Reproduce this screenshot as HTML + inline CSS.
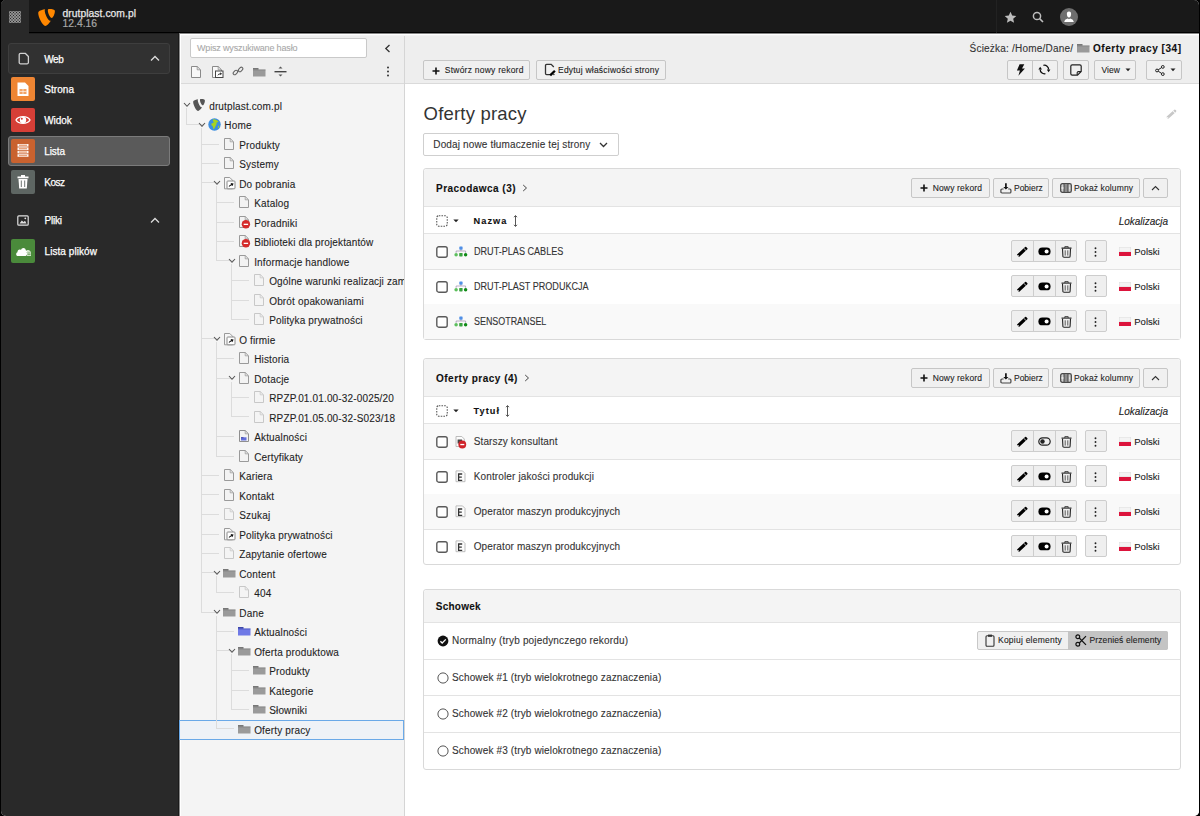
<!DOCTYPE html><html><head><meta charset="utf-8"><style>
html,body{margin:0;padding:0;}
body{width:1200px;height:816px;overflow:hidden;background:#000;position:relative;font-family:"Liberation Sans",sans-serif;}
.t{position:absolute;white-space:nowrap;line-height:1;-webkit-text-stroke:0.1px currentColor;}
.r{position:absolute;}
#app{position:absolute;left:1px;top:0;width:1198px;height:816px;border-radius:5px;overflow:hidden;background:#fff;}
</style></head><body><div id="app"><div id="w" style="position:absolute;left:-1px;top:0;width:1200px;height:816px;"><div class="r" style="left:0px;top:0px;width:1200px;height:33px;background:#191919;border-radius:0px;box-sizing:border-box;"></div>
<div class="r" style="left:29px;top:32px;width:1171px;height:1px;background:#000;border-radius:0px;box-sizing:border-box;"></div>
<div class="r" style="left:0px;top:0px;width:29px;height:33px;background:#292929;border-radius:0px;box-sizing:border-box;"></div>
<div class="r" style="left:0px;top:33px;width:179px;height:783px;background:#292929;border-radius:0px;box-sizing:border-box;"></div>
<div class="r" style="left:178px;top:33px;width:1px;height:783px;background:#1a1a1a;border-radius:0px;box-sizing:border-box;"></div>
<div class="r" style="left:179px;top:33px;width:225px;height:783px;background:#f4f4f4;border-radius:0px;box-sizing:border-box;"></div>
<div class="r" style="left:179px;top:33px;width:225px;height:50px;background:#eeeeee;border-radius:0px;box-sizing:border-box;"></div>
<div class="r" style="left:179px;top:83px;width:225px;height:1px;background:#dadada;border-radius:0px;box-sizing:border-box;"></div>
<div class="r" style="left:404px;top:33px;width:1px;height:783px;background:#d5d5d5;border-radius:0px;box-sizing:border-box;"></div>
<div class="r" style="left:405px;top:33px;width:795px;height:50px;background:#eeeeee;border-radius:0px;box-sizing:border-box;"></div>
<div class="r" style="left:405px;top:83px;width:795px;height:1px;background:#dadada;border-radius:0px;box-sizing:border-box;"></div>
<div class="r" style="left:405px;top:84px;width:795px;height:732px;background:#ffffff;border-radius:0px;box-sizing:border-box;"></div>
<div class="r" style="left:179px;top:33px;width:1021px;height:1px;background:#858585;border-radius:0px;box-sizing:border-box;"></div>
<div class="r" style="left:179px;top:34px;width:1021px;height:1px;background:#ffffff;border-radius:0px;box-sizing:border-box;"></div>
<div class="r" style="left:179px;top:35px;width:1021px;height:1px;background:#f3f3f3;border-radius:0px;box-sizing:border-box;"></div>
<div class="r" style="left:29px;top:33px;width:149px;height:1px;background:#1f1f1f;border-radius:0px;box-sizing:border-box;"></div>
<div class="r" style="left:179px;top:34px;width:1px;height:782px;background:#8a8a8a;border-radius:0px;box-sizing:border-box;"></div>
<div class="r" style="left:180px;top:35px;width:1px;height:781px;background:#ffffff;border-radius:0px;box-sizing:border-box;"></div>
<div class="r" style="left:996px;top:0px;width:1px;height:33px;background:#222;border-radius:0px;box-sizing:border-box;"></div>
<svg class="r" style="left:8.5px;top:10.5px;" width="12" height="12" viewBox="0 0 12 12"><circle cx="1.5" cy="1.5" r="1.15" fill="none" stroke="#cfcfcf" stroke-width="0.8"/><circle cx="1.5" cy="4.5" r="1.15" fill="none" stroke="#cfcfcf" stroke-width="0.8"/><circle cx="1.5" cy="7.5" r="1.15" fill="none" stroke="#cfcfcf" stroke-width="0.8"/><circle cx="1.5" cy="10.5" r="1.15" fill="none" stroke="#cfcfcf" stroke-width="0.8"/><circle cx="4.5" cy="1.5" r="1.15" fill="none" stroke="#cfcfcf" stroke-width="0.8"/><circle cx="4.5" cy="4.5" r="1.15" fill="none" stroke="#cfcfcf" stroke-width="0.8"/><circle cx="4.5" cy="7.5" r="1.15" fill="none" stroke="#cfcfcf" stroke-width="0.8"/><circle cx="4.5" cy="10.5" r="1.15" fill="none" stroke="#cfcfcf" stroke-width="0.8"/><circle cx="7.5" cy="1.5" r="1.15" fill="none" stroke="#cfcfcf" stroke-width="0.8"/><circle cx="7.5" cy="4.5" r="1.15" fill="none" stroke="#cfcfcf" stroke-width="0.8"/><circle cx="7.5" cy="7.5" r="1.15" fill="none" stroke="#cfcfcf" stroke-width="0.8"/><circle cx="7.5" cy="10.5" r="1.15" fill="none" stroke="#cfcfcf" stroke-width="0.8"/><circle cx="10.5" cy="1.5" r="1.15" fill="none" stroke="#cfcfcf" stroke-width="0.8"/><circle cx="10.5" cy="4.5" r="1.15" fill="none" stroke="#cfcfcf" stroke-width="0.8"/><circle cx="10.5" cy="7.5" r="1.15" fill="none" stroke="#cfcfcf" stroke-width="0.8"/><circle cx="10.5" cy="10.5" r="1.15" fill="none" stroke="#cfcfcf" stroke-width="0.8"/></svg>
<svg class="r" style="left:38px;top:9px;" width="17" height="17" viewBox="0 0 24 24"><path d="M18.08 16.539c-.356.107-.64.143-1.014.143-3.05 0-7.53-10.65-7.53-14.195 0-1.306.31-1.741.747-2.122C6.543.808 2.203 2.131.814 3.826c-.306.426-.487 1.094-.487 1.958C.327 11.306 6.22 23.84 10.38 23.84c1.926 0 5.17-3.166 7.7-7.3M16.14.15c3.85 0 7.7.62 7.7 2.8 0 4.42-2.8 9.78-4.23 9.78-2.56 0-5.74-7.12-5.74-10.68C13.87.43 14.45.15 16.14.15" fill="#ff8700"/></svg>
<div class="t" style="left:62.50px;top:8.58px;font-size:10.3px;color:#e8e8e8;font-weight:normal;font-style:normal;letter-spacing:0.053px;-webkit-text-stroke:0.25px #e8e8e8;">drutplast.com.pl</div>
<div class="t" style="left:62.50px;top:18.68px;font-size:10.3px;color:#a8a8a8;font-weight:normal;font-style:normal;letter-spacing:0.023px;-webkit-text-stroke:0.2px #a8a8a8;">12.4.16</div>
<svg class="r" style="left:1003.5px;top:10.5px;" width="13" height="13" viewBox="0 0 13 13"><path d="M6.5 0.8 L8.2 4.6 L12.3 5 L9.2 7.7 L10.1 11.8 L6.5 9.7 L2.9 11.8 L3.8 7.7 L0.7 5 L4.8 4.6 Z" fill="#bdbdbd"/></svg>
<svg class="r" style="left:1031.5px;top:10.5px;" width="12" height="12" viewBox="0 0 12 12"><circle cx="5" cy="5" r="3.6" fill="none" stroke="#bdbdbd" stroke-width="1.5"/><path d="M7.6 7.6 L11 11" stroke="#bdbdbd" stroke-width="1.6"/></svg>
<svg class="r" style="left:1059.5px;top:8px;" width="18" height="18" viewBox="0 0 18 18"><circle cx="9" cy="9" r="9" fill="#6e6e6e"/><path d="M9 3.5 C10.6 3.5 11.3 4.8 11.1 6.6 C10.9 8.3 10.2 9.6 9 9.6 C7.8 9.6 7.1 8.3 6.9 6.6 C6.7 4.8 7.4 3.5 9 3.5Z M4.2 14 C4.4 11.8 6.3 10.8 7.8 10.4 L9 11.2 L10.2 10.4 C11.7 10.8 13.6 11.8 13.8 14 Z" fill="#fff"/></svg>
<div class="r" style="left:8px;top:43px;width:162px;height:31px;background:#313131;border:1px solid #3e3e3e;border-radius:3px;box-sizing:border-box;"></div>
<svg class="r" style="left:17.5px;top:52px;" width="12" height="13" viewBox="0 0 12 13"><path d="M2.6 1.3 H7.2 L10.4 4.5 V10.4 A1.4 1.4 0 0 1 9 11.8 H2.6 A1.4 1.4 0 0 1 1.2 10.4 V2.7 A1.4 1.4 0 0 1 2.6 1.3Z" fill="none" stroke="#d0d0d0" stroke-width="1.3" stroke-linejoin="round"/></svg>
<div class="t" style="left:44.20px;top:54.83px;font-size:10px;color:#fff;font-weight:normal;font-style:normal;letter-spacing:-0.34px;-webkit-text-stroke:0.25px #fff;">Web</div>
<svg class="r" style="left:150px;top:55px;" width="10" height="7" viewBox="0 0 10 7"><path d="M1 5.5 L5 1.5 L9 5.5" fill="none" stroke="#dcdcdc" stroke-width="1.3"/></svg>
<div class="r" style="left:8px;top:136px;width:162px;height:30px;background:#5a5a5a;border:1px solid #7b7b7b;border-radius:3px;box-sizing:border-box;"></div>
<div class="r" style="left:11px;top:77px;width:24px;height:24px;background:#ee8533;border-radius:2px;box-sizing:border-box;"></div>
<svg class="r" style="left:17px;top:82px;" width="12" height="15" viewBox="0 0 12 15"><path d="M0.5 0.5 H8 L11.5 4 V14 H0.5 Z" fill="#fff"/><rect x="2.5" y="7" width="7" height="5" fill="#f2a466"/><path d="M2.5 9.5 H9.5 M6 7 V12" stroke="#fff" stroke-width="0.6"/></svg>
<div class="t" style="left:44.20px;top:84.73px;font-size:10px;color:#fff;font-weight:normal;font-style:normal;letter-spacing:0.066px;-webkit-text-stroke:0.25px #fff;">Strona</div>
<div class="r" style="left:11px;top:108px;width:24px;height:24px;background:#d63f37;border-radius:2px;box-sizing:border-box;"></div>
<svg class="r" style="left:15px;top:114px;" width="16" height="12" viewBox="0 0 16 12"><path d="M1 6 C3.5 1.5 12.5 1.5 15 6 C12.5 10.5 3.5 10.5 1 6Z" fill="none" stroke="#fff" stroke-width="1.4"/><circle cx="8" cy="6" r="3.2" fill="#fff"/><circle cx="6.8" cy="4.8" r="1" fill="#d63f37"/></svg>
<div class="t" style="left:44.20px;top:115.73px;font-size:10px;color:#fff;font-weight:normal;font-style:normal;letter-spacing:-0.05px;-webkit-text-stroke:0.25px #fff;">Widok</div>
<div class="r" style="left:11px;top:139px;width:24px;height:24px;background:#c9622f;border-radius:2px;box-sizing:border-box;"></div>
<svg class="r" style="left:16px;top:143px;" width="14" height="16" viewBox="0 0 14 16"><rect x="1.5" y="1.0" width="11" height="2.6" fill="#fff" opacity="0.95"/><rect x="3" y="1.6" width="8" height="1.4" fill="#e9a47d"/><rect x="1.5" y="4.4" width="11" height="2.6" fill="#fff" opacity="0.95"/><rect x="3" y="5.0" width="8" height="1.4" fill="#e9a47d"/><rect x="1.5" y="7.8" width="11" height="2.6" fill="#fff" opacity="0.95"/><rect x="3" y="8.4" width="8" height="1.4" fill="#e9a47d"/><rect x="1.5" y="11.2" width="11" height="2.6" fill="#fff" opacity="0.95"/><rect x="3" y="11.799999999999999" width="8" height="1.4" fill="#e9a47d"/></svg>
<div class="t" style="left:44.20px;top:146.73px;font-size:10px;color:#fff;font-weight:normal;font-style:normal;letter-spacing:-0.082px;-webkit-text-stroke:0.25px #fff;">Lista</div>
<div class="r" style="left:11px;top:170px;width:24px;height:24px;background:#5e6663;border-radius:2px;box-sizing:border-box;"></div>
<svg class="r" style="left:17px;top:175px;" width="12" height="14" viewBox="0 0 12 14"><rect x="0.5" y="1.5" width="11" height="1.8" fill="#fff"/><rect x="4" y="0" width="4" height="2" fill="#fff"/><path d="M1.5 4 H10.5 L9.8 13.5 H2.2 Z" fill="#fff"/><path d="M4.3 5.5 V12 M7.7 5.5 V12" stroke="#5e6663" stroke-width="0.9"/></svg>
<div class="t" style="left:44.20px;top:177.73px;font-size:10px;color:#fff;font-weight:normal;font-style:normal;letter-spacing:-0.477px;-webkit-text-stroke:0.25px #fff;">Kosz</div>
<svg class="r" style="left:17px;top:215px;" width="12" height="11" viewBox="0 0 12 11"><rect x="0.8" y="0.8" width="10.4" height="9.4" rx="1" fill="none" stroke="#e0e0e0" stroke-width="1.2"/><path d="M2.5 8.5 L4.8 5.5 L6.5 7 L8 5.8 L9.5 8.5 Z" fill="#e0e0e0"/><circle cx="8.3" cy="3.3" r="0.9" fill="#e0e0e0"/></svg>
<div class="t" style="left:44.50px;top:216.03px;font-size:10px;color:#fff;font-weight:normal;font-style:normal;letter-spacing:-0.21px;-webkit-text-stroke:0.25px #fff;">Pliki</div>
<svg class="r" style="left:150px;top:217px;" width="10" height="7" viewBox="0 0 10 7"><path d="M1 5.5 L5 1.5 L9 5.5" fill="none" stroke="#dcdcdc" stroke-width="1.3"/></svg>
<div class="r" style="left:11px;top:239px;width:24px;height:24px;background:#4a8a3b;border-radius:2px;box-sizing:border-box;"></div>
<svg class="r" style="left:15px;top:245px;" width="17" height="12" viewBox="0 0 17 12"><path d="M3 11 C0.8 11 0.5 8 2.5 7.3 C2.2 5 4.5 3.8 6 5 C6.5 2.2 10.5 2.2 10.8 5.2 C12.3 5.2 12.5 7 11.6 7.6 C12.6 8.5 12 11 10.5 11 Z" fill="#fff"/><path d="M12 5 H14 L16 7 V11 H12" fill="#cfe3c8"/><path d="M12.5 8 H15.5 M12.5 9.5 H15.5" stroke="#4a8a3b" stroke-width="0.6"/></svg>
<div class="t" style="left:44.50px;top:246.84px;font-size:10px;color:#fff;font-weight:normal;font-style:normal;letter-spacing:0.071px;-webkit-text-stroke:0.25px #fff;">Lista plików</div>
<div class="r" style="left:190px;top:38px;width:177px;height:20px;background:#fff;border:1px solid #c9c9c9;border-radius:2px;box-sizing:border-box;"></div>
<div class="t" style="left:197.00px;top:43.58px;font-size:9px;color:#a9a9a9;font-weight:normal;font-style:normal;letter-spacing:-0.161px;">Wpisz wyszukiwane hasło</div>
<svg class="r" style="left:384px;top:44px;" width="7" height="9" viewBox="0 0 7 9"><path d="M5.5 1 L1.8 4.5 L5.5 8" fill="none" stroke="#333" stroke-width="1.3"/></svg>
<svg class="r" style="left:385.5px;top:66px;" width="4" height="11" viewBox="0 0 4 11"><circle cx="2" cy="1.5" r="1" fill="#333"/><circle cx="2" cy="5.5" r="1" fill="#333"/><circle cx="2" cy="9.5" r="1" fill="#333"/></svg>
<svg class="r" style="left:190px;top:64.5px;" width="12" height="14" viewBox="0 0 12 14"><path d="M1.5 1.5 H7.2 L10.5 4.8 V12.5 H1.5 Z" fill="#f8f8f8" stroke="#8a8a8a" stroke-width="1"/><path d="M7.2 1.5 V4.8 H10.5" fill="none" stroke="#8a8a8a" stroke-width="0.8"/></svg>
<svg class="r" style="left:211px;top:64.5px;" width="14" height="14" viewBox="0 0 14 14"><path d="M1.5 1.5 H7.2 L10.5 4.8 V12.5 H1.5 Z" fill="#f8f8f8" stroke="#8a8a8a" stroke-width="1"/><path d="M7.2 1.5 V4.8 H10.5" fill="none" stroke="#8a8a8a" stroke-width="0.8"/><rect x="4.5" y="6" width="7.5" height="6.5" fill="#fff" stroke="#444" stroke-width="1"/><path d="M6.3 11 Q6.8 8.3 9.3 8.3 L9.3 7.3 L11 8.8 L9.3 10.3 L9.3 9.3 Q7.5 9.3 6.3 11Z" fill="#222"/></svg>
<svg class="r" style="left:232px;top:65px;" width="12" height="12" viewBox="0 0 12 12"><path d="M5.2 6.8 L6.8 5.2" stroke="#777" stroke-width="1.2"/><rect x="0.9" y="6" width="5" height="3" rx="1.5" transform="rotate(-45 3.4 7.5)" fill="none" stroke="#666" stroke-width="1.1"/><rect x="6.1" y="3" width="5" height="3" rx="1.5" transform="rotate(-45 8.6 4.5)" fill="none" stroke="#666" stroke-width="1.1"/></svg>
<svg class="r" style="left:253px;top:66.5px;" width="13" height="10" viewBox="0 0 13 10"><rect x="0" y="1" width="5.5" height="2" fill="#777"/><rect x="0" y="2.5" width="12.5" height="7" fill="#9a9a9a"/><rect x="0" y="2.5" width="12.5" height="1" fill="#777" opacity="0.5"/></svg>
<svg class="r" style="left:274px;top:64.5px;" width="13" height="13" viewBox="0 0 13 13"><path d="M4.5 3.5 L6.5 1.5 L8.5 3.5Z M4.5 9.5 L6.5 11.5 L8.5 9.5Z" fill="#555"/><rect x="0.5" y="6" width="12" height="1.4" fill="#444"/></svg>
<div style="position:absolute;left:0;top:0;width:404px;height:816px;overflow:hidden">
<div class="r" style="left:179px;top:720px;width:225px;height:20px;background:#eef2f7;border:1px solid #6aa9e8;border-radius:0px;box-sizing:border-box;"></div>
<div class="r" style="left:186px;top:108px;width:1px;height:16px;background:#dcdcdc;border-radius:0px;box-sizing:border-box;"></div>
<div class="r" style="left:186px;top:124px;width:18px;height:1px;background:#dcdcdc;border-radius:0px;box-sizing:border-box;"></div>
<div class="r" style="left:201px;top:128px;width:1px;height:484px;background:#dcdcdc;border-radius:0px;box-sizing:border-box;"></div>
<div class="r" style="left:201px;top:144px;width:18px;height:1px;background:#dcdcdc;border-radius:0px;box-sizing:border-box;"></div>
<div class="r" style="left:201px;top:163px;width:18px;height:1px;background:#dcdcdc;border-radius:0px;box-sizing:border-box;"></div>
<div class="r" style="left:201px;top:182px;width:18px;height:1px;background:#dcdcdc;border-radius:0px;box-sizing:border-box;"></div>
<div class="r" style="left:216px;top:186px;width:1px;height:74px;background:#dcdcdc;border-radius:0px;box-sizing:border-box;"></div>
<div class="r" style="left:216px;top:202px;width:18px;height:1px;background:#dcdcdc;border-radius:0px;box-sizing:border-box;"></div>
<div class="r" style="left:216px;top:222px;width:18px;height:1px;background:#dcdcdc;border-radius:0px;box-sizing:border-box;"></div>
<div class="r" style="left:216px;top:241px;width:18px;height:1px;background:#dcdcdc;border-radius:0px;box-sizing:border-box;"></div>
<div class="r" style="left:216px;top:260px;width:18px;height:1px;background:#dcdcdc;border-radius:0px;box-sizing:border-box;"></div>
<div class="r" style="left:231px;top:264px;width:1px;height:55px;background:#dcdcdc;border-radius:0px;box-sizing:border-box;"></div>
<div class="r" style="left:231px;top:280px;width:18px;height:1px;background:#dcdcdc;border-radius:0px;box-sizing:border-box;"></div>
<div class="r" style="left:231px;top:300px;width:18px;height:1px;background:#dcdcdc;border-radius:0px;box-sizing:border-box;"></div>
<div class="r" style="left:231px;top:319px;width:18px;height:1px;background:#dcdcdc;border-radius:0px;box-sizing:border-box;"></div>
<div class="r" style="left:201px;top:338px;width:18px;height:1px;background:#dcdcdc;border-radius:0px;box-sizing:border-box;"></div>
<div class="r" style="left:216px;top:342px;width:1px;height:114px;background:#dcdcdc;border-radius:0px;box-sizing:border-box;"></div>
<div class="r" style="left:216px;top:358px;width:18px;height:1px;background:#dcdcdc;border-radius:0px;box-sizing:border-box;"></div>
<div class="r" style="left:216px;top:378px;width:18px;height:1px;background:#dcdcdc;border-radius:0px;box-sizing:border-box;"></div>
<div class="r" style="left:231px;top:382px;width:1px;height:34px;background:#dcdcdc;border-radius:0px;box-sizing:border-box;"></div>
<div class="r" style="left:231px;top:397px;width:18px;height:1px;background:#dcdcdc;border-radius:0px;box-sizing:border-box;"></div>
<div class="r" style="left:231px;top:416px;width:18px;height:1px;background:#dcdcdc;border-radius:0px;box-sizing:border-box;"></div>
<div class="r" style="left:216px;top:436px;width:18px;height:1px;background:#dcdcdc;border-radius:0px;box-sizing:border-box;"></div>
<div class="r" style="left:216px;top:456px;width:18px;height:1px;background:#dcdcdc;border-radius:0px;box-sizing:border-box;"></div>
<div class="r" style="left:201px;top:475px;width:18px;height:1px;background:#dcdcdc;border-radius:0px;box-sizing:border-box;"></div>
<div class="r" style="left:201px;top:494px;width:18px;height:1px;background:#dcdcdc;border-radius:0px;box-sizing:border-box;"></div>
<div class="r" style="left:201px;top:514px;width:18px;height:1px;background:#dcdcdc;border-radius:0px;box-sizing:border-box;"></div>
<div class="r" style="left:201px;top:534px;width:18px;height:1px;background:#dcdcdc;border-radius:0px;box-sizing:border-box;"></div>
<div class="r" style="left:201px;top:553px;width:18px;height:1px;background:#dcdcdc;border-radius:0px;box-sizing:border-box;"></div>
<div class="r" style="left:201px;top:572px;width:18px;height:1px;background:#dcdcdc;border-radius:0px;box-sizing:border-box;"></div>
<div class="r" style="left:216px;top:576px;width:1px;height:16px;background:#dcdcdc;border-radius:0px;box-sizing:border-box;"></div>
<div class="r" style="left:216px;top:592px;width:18px;height:1px;background:#dcdcdc;border-radius:0px;box-sizing:border-box;"></div>
<div class="r" style="left:201px;top:612px;width:18px;height:1px;background:#dcdcdc;border-radius:0px;box-sizing:border-box;"></div>
<div class="r" style="left:216px;top:616px;width:1px;height:112px;background:#dcdcdc;border-radius:0px;box-sizing:border-box;"></div>
<div class="r" style="left:216px;top:631px;width:18px;height:1px;background:#dcdcdc;border-radius:0px;box-sizing:border-box;"></div>
<div class="r" style="left:216px;top:650px;width:18px;height:1px;background:#dcdcdc;border-radius:0px;box-sizing:border-box;"></div>
<div class="r" style="left:231px;top:654px;width:1px;height:55px;background:#dcdcdc;border-radius:0px;box-sizing:border-box;"></div>
<div class="r" style="left:231px;top:670px;width:18px;height:1px;background:#dcdcdc;border-radius:0px;box-sizing:border-box;"></div>
<div class="r" style="left:231px;top:690px;width:18px;height:1px;background:#dcdcdc;border-radius:0px;box-sizing:border-box;"></div>
<div class="r" style="left:231px;top:709px;width:18px;height:1px;background:#dcdcdc;border-radius:0px;box-sizing:border-box;"></div>
<div class="r" style="left:216px;top:728px;width:18px;height:1px;background:#dcdcdc;border-radius:0px;box-sizing:border-box;"></div>
<svg class="r" style="left:183px;top:102.4px;" width="8" height="5.3" viewBox="0 0 8 5.3"><path d="M1 1 L4.0 4.3 L7 1" fill="none" stroke="#555" stroke-width="1.1"/></svg>
<svg class="r" style="left:193px;top:99.0px;" width="12" height="12" viewBox="0 0 24 24"><path d="M18.08 16.539c-.356.107-.64.143-1.014.143-3.05 0-7.53-10.65-7.53-14.195 0-1.306.31-1.741.747-2.122C6.543.808 2.203 2.131.814 3.826c-.306.426-.487 1.094-.487 1.958C.327 11.306 6.22 23.84 10.38 23.84c1.926 0 5.17-3.166 7.7-7.3M16.14.15c3.85 0 7.7.62 7.7 2.8 0 4.42-2.8 9.78-4.23 9.78-2.56 0-5.74-7.12-5.74-10.68C13.87.43 14.45.15 16.14.15" fill="#555"/></svg>
<div class="t" style="left:209.20px;top:101.53px;font-size:10px;color:#1f1f1f;font-weight:normal;font-style:normal;letter-spacing:0.141px;">drutplast.com.pl</div>
<svg class="r" style="left:198px;top:121.9px;" width="8" height="5.3" viewBox="0 0 8 5.3"><path d="M1 1 L4.0 4.3 L7 1" fill="none" stroke="#555" stroke-width="1.1"/></svg>
<svg class="r" style="left:207.5px;top:117.7px;" width="13" height="13" viewBox="0 0 13 13"><circle cx="6.5" cy="6.5" r="6.2" fill="#3d8fe0"/><path d="M5 1.2 C7 1 9.5 2 10.5 3.5 C9.8 4.5 9 4 8.5 5 C9 6 8 7 7.5 8 C7.2 9.5 6.2 10.8 5.5 11.5 C5 10 5.3 8.8 4.5 8 C3.5 7.5 3 6.5 3.5 5.5 C4.5 5 5.5 5.2 5.8 4.2 C5.2 3.5 4.5 2.5 5 1.2Z" fill="#a5d321"/><path d="M10.5 7.5 C11.5 8 11.5 9.5 10.5 10.5 C10 9.5 9.8 8.5 10.5 7.5Z" fill="#a5d321"/></svg>
<div class="t" style="left:224.20px;top:121.03px;font-size:10px;color:#1f1f1f;font-weight:normal;font-style:normal;letter-spacing:0.267px;">Home</div>
<svg class="r" style="left:222.5px;top:136.7px;" width="12" height="14" viewBox="0 0 12 14"><path d="M1.5 1.5 H7.2 L10.5 4.8 V12.5 H1.5 Z" fill="#f3f3f3" stroke="#9a9a9a" stroke-width="1"/><path d="M7.2 1.5 V4.8 H10.5" fill="none" stroke="#9a9a9a" stroke-width="0.8"/></svg>
<div class="t" style="left:239.20px;top:140.53px;font-size:10px;color:#1f1f1f;font-weight:normal;font-style:normal;letter-spacing:0.169px;">Produkty</div>
<svg class="r" style="left:222.5px;top:156.2px;" width="12" height="14" viewBox="0 0 12 14"><path d="M1.5 1.5 H7.2 L10.5 4.8 V12.5 H1.5 Z" fill="#f3f3f3" stroke="#9a9a9a" stroke-width="1"/><path d="M7.2 1.5 V4.8 H10.5" fill="none" stroke="#9a9a9a" stroke-width="0.8"/></svg>
<div class="t" style="left:239.20px;top:160.03px;font-size:10px;color:#1f1f1f;font-weight:normal;font-style:normal;letter-spacing:0.192px;">Systemy</div>
<svg class="r" style="left:213px;top:180.4px;" width="8" height="5.3" viewBox="0 0 8 5.3"><path d="M1 1 L4.0 4.3 L7 1" fill="none" stroke="#555" stroke-width="1.1"/></svg>
<svg class="r" style="left:222.5px;top:175.7px;" width="14" height="14" viewBox="0 0 14 14"><path d="M1.5 1.5 H6.8 L9.6 4.3 V12.8 H1.5 Z" fill="#f6f6f6" stroke="#9a9a9a" stroke-width="1"/><rect x="4" y="5" width="8" height="7.8" rx="0.8" fill="#fff" stroke="#8a8a8a" stroke-width="1"/><path d="M5.6 11.2 Q6 8.6 8.2 8.2 L7.6 7 L10.6 7.6 L9.4 10.3 L8.9 9.3 Q7.2 9.6 5.6 11.2Z" fill="#111"/></svg>
<div class="t" style="left:239.20px;top:179.53px;font-size:10px;color:#1f1f1f;font-weight:normal;font-style:normal;letter-spacing:0.163px;">Do pobrania</div>
<svg class="r" style="left:237.5px;top:195.2px;" width="12" height="14" viewBox="0 0 12 14"><path d="M1.5 1.5 H7.2 L10.5 4.8 V12.5 H1.5 Z" fill="#f3f3f3" stroke="#9a9a9a" stroke-width="1"/><path d="M7.2 1.5 V4.8 H10.5" fill="none" stroke="#9a9a9a" stroke-width="0.8"/></svg>
<div class="t" style="left:254.20px;top:199.03px;font-size:10px;color:#1f1f1f;font-weight:normal;font-style:normal;letter-spacing:0.17px;">Katalog</div>
<svg class="r" style="left:237.5px;top:214.7px;" width="14" height="15" viewBox="0 0 14 15"><path d="M1.5 1.5 H7.2 L10.5 4.8 V12.5 H1.5 Z" fill="#f3f3f3" stroke="#9a9a9a" stroke-width="1"/><path d="M7.2 1.5 V4.8 H10.5" fill="none" stroke="#9a9a9a" stroke-width="0.8"/><circle cx="7.9" cy="9.3" r="4.2" fill="#d52b2b"/><rect x="5.7" y="8.7" width="4.4" height="1.3" fill="#fff"/></svg>
<div class="t" style="left:254.20px;top:218.53px;font-size:10px;color:#1f1f1f;font-weight:normal;font-style:normal;letter-spacing:0.156px;">Poradniki</div>
<svg class="r" style="left:237.5px;top:234.2px;" width="14" height="15" viewBox="0 0 14 15"><path d="M1.5 1.5 H7.2 L10.5 4.8 V12.5 H1.5 Z" fill="#f3f3f3" stroke="#9a9a9a" stroke-width="1"/><path d="M7.2 1.5 V4.8 H10.5" fill="none" stroke="#9a9a9a" stroke-width="0.8"/><circle cx="7.9" cy="9.3" r="4.2" fill="#d52b2b"/><rect x="5.7" y="8.7" width="4.4" height="1.3" fill="#fff"/></svg>
<div class="t" style="left:254.20px;top:238.03px;font-size:10px;color:#1f1f1f;font-weight:normal;font-style:normal;letter-spacing:0.133px;">Biblioteki dla projektantów</div>
<svg class="r" style="left:228px;top:258.4px;" width="8" height="5.3" viewBox="0 0 8 5.3"><path d="M1 1 L4.0 4.3 L7 1" fill="none" stroke="#555" stroke-width="1.1"/></svg>
<svg class="r" style="left:237.5px;top:253.7px;" width="12" height="14" viewBox="0 0 12 14"><path d="M1.5 1.5 H7.2 L10.5 4.8 V12.5 H1.5 Z" fill="#f3f3f3" stroke="#9a9a9a" stroke-width="1"/><path d="M7.2 1.5 V4.8 H10.5" fill="none" stroke="#9a9a9a" stroke-width="0.8"/></svg>
<div class="t" style="left:254.20px;top:257.54px;font-size:10px;color:#1f1f1f;font-weight:normal;font-style:normal;letter-spacing:0.154px;">Informacje handlowe</div>
<svg class="r" style="left:252.5px;top:273.2px;" width="12" height="14" viewBox="0 0 12 14"><path d="M1.5 1.5 H7.2 L10.5 4.8 V12.5 H1.5 Z" fill="#f4f4f4" stroke="#c8c8c8" stroke-width="1"/><path d="M7.2 1.5 V4.8 H10.5" fill="none" stroke="#c8c8c8" stroke-width="0.8"/></svg>
<div class="t" style="left:269.20px;top:277.04px;font-size:10px;color:#1f1f1f;font-weight:normal;font-style:normal;letter-spacing:0.145px;">Ogólne warunki realizacji zamówień</div>
<svg class="r" style="left:252.5px;top:292.7px;" width="12" height="14" viewBox="0 0 12 14"><path d="M1.5 1.5 H7.2 L10.5 4.8 V12.5 H1.5 Z" fill="#f4f4f4" stroke="#c8c8c8" stroke-width="1"/><path d="M7.2 1.5 V4.8 H10.5" fill="none" stroke="#c8c8c8" stroke-width="0.8"/></svg>
<div class="t" style="left:269.20px;top:296.54px;font-size:10px;color:#1f1f1f;font-weight:normal;font-style:normal;letter-spacing:0.162px;">Obrót opakowaniami</div>
<svg class="r" style="left:252.5px;top:312.2px;" width="12" height="14" viewBox="0 0 12 14"><path d="M1.5 1.5 H7.2 L10.5 4.8 V12.5 H1.5 Z" fill="#f4f4f4" stroke="#c8c8c8" stroke-width="1"/><path d="M7.2 1.5 V4.8 H10.5" fill="none" stroke="#c8c8c8" stroke-width="0.8"/></svg>
<div class="t" style="left:269.20px;top:316.04px;font-size:10px;color:#1f1f1f;font-weight:normal;font-style:normal;letter-spacing:0.143px;">Polityka prywatności</div>
<svg class="r" style="left:213px;top:336.4px;" width="8" height="5.3" viewBox="0 0 8 5.3"><path d="M1 1 L4.0 4.3 L7 1" fill="none" stroke="#555" stroke-width="1.1"/></svg>
<svg class="r" style="left:222.5px;top:331.7px;" width="14" height="14" viewBox="0 0 14 14"><path d="M1.5 1.5 H6.8 L9.6 4.3 V12.8 H1.5 Z" fill="#f6f6f6" stroke="#9a9a9a" stroke-width="1"/><rect x="4" y="5" width="8" height="7.8" rx="0.8" fill="#fff" stroke="#8a8a8a" stroke-width="1"/><path d="M5.6 11.2 Q6 8.6 8.2 8.2 L7.6 7 L10.6 7.6 L9.4 10.3 L8.9 9.3 Q7.2 9.6 5.6 11.2Z" fill="#111"/></svg>
<div class="t" style="left:239.20px;top:335.54px;font-size:10px;color:#1f1f1f;font-weight:normal;font-style:normal;letter-spacing:0.15px;">O firmie</div>
<svg class="r" style="left:237.5px;top:351.2px;" width="12" height="14" viewBox="0 0 12 14"><path d="M1.5 1.5 H7.2 L10.5 4.8 V12.5 H1.5 Z" fill="#f3f3f3" stroke="#9a9a9a" stroke-width="1"/><path d="M7.2 1.5 V4.8 H10.5" fill="none" stroke="#9a9a9a" stroke-width="0.8"/></svg>
<div class="t" style="left:254.20px;top:355.04px;font-size:10px;color:#1f1f1f;font-weight:normal;font-style:normal;letter-spacing:0.145px;">Historia</div>
<svg class="r" style="left:228px;top:375.4px;" width="8" height="5.3" viewBox="0 0 8 5.3"><path d="M1 1 L4.0 4.3 L7 1" fill="none" stroke="#555" stroke-width="1.1"/></svg>
<svg class="r" style="left:237.5px;top:370.7px;" width="12" height="14" viewBox="0 0 12 14"><path d="M1.5 1.5 H7.2 L10.5 4.8 V12.5 H1.5 Z" fill="#f3f3f3" stroke="#9a9a9a" stroke-width="1"/><path d="M7.2 1.5 V4.8 H10.5" fill="none" stroke="#9a9a9a" stroke-width="0.8"/></svg>
<div class="t" style="left:254.20px;top:374.54px;font-size:10px;color:#1f1f1f;font-weight:normal;font-style:normal;letter-spacing:0.17px;">Dotacje</div>
<svg class="r" style="left:252.5px;top:390.2px;" width="12" height="14" viewBox="0 0 12 14"><path d="M1.5 1.5 H7.2 L10.5 4.8 V12.5 H1.5 Z" fill="#f4f4f4" stroke="#c8c8c8" stroke-width="1"/><path d="M7.2 1.5 V4.8 H10.5" fill="none" stroke="#c8c8c8" stroke-width="0.8"/></svg>
<div class="t" style="left:269.20px;top:394.04px;font-size:10px;color:#1f1f1f;font-weight:normal;font-style:normal;letter-spacing:0.158px;">RPZP.01.01.00-32-0025/20</div>
<svg class="r" style="left:252.5px;top:409.7px;" width="12" height="14" viewBox="0 0 12 14"><path d="M1.5 1.5 H7.2 L10.5 4.8 V12.5 H1.5 Z" fill="#f4f4f4" stroke="#c8c8c8" stroke-width="1"/><path d="M7.2 1.5 V4.8 H10.5" fill="none" stroke="#c8c8c8" stroke-width="0.8"/></svg>
<div class="t" style="left:269.20px;top:413.54px;font-size:10px;color:#1f1f1f;font-weight:normal;font-style:normal;letter-spacing:0.159px;">RPZP.01.05.00-32-S023/18</div>
<svg class="r" style="left:237.5px;top:429.2px;" width="12" height="14" viewBox="0 0 12 14"><path d="M1.5 1.5 H7.2 L10.5 4.8 V12.5 H1.5 Z" fill="#f3f3f3" stroke="#8f8f8f" stroke-width="1"/><path d="M7.2 1.5 V4.8 H10.5" fill="none" stroke="#9a9a9a" stroke-width="0.8"/><rect x="3" y="8.3" width="5.5" height="3.2" fill="#6470dc"/><rect x="3" y="8.3" width="2.5" height="0.9" fill="#3a44a0"/></svg>
<div class="t" style="left:254.20px;top:433.04px;font-size:10px;color:#1f1f1f;font-weight:normal;font-style:normal;letter-spacing:0.153px;">Aktualności</div>
<svg class="r" style="left:237.5px;top:448.7px;" width="12" height="14" viewBox="0 0 12 14"><path d="M1.5 1.5 H7.2 L10.5 4.8 V12.5 H1.5 Z" fill="#f3f3f3" stroke="#9a9a9a" stroke-width="1"/><path d="M7.2 1.5 V4.8 H10.5" fill="none" stroke="#9a9a9a" stroke-width="0.8"/></svg>
<div class="t" style="left:254.20px;top:452.54px;font-size:10px;color:#1f1f1f;font-weight:normal;font-style:normal;letter-spacing:0.142px;">Certyfikaty</div>
<svg class="r" style="left:222.5px;top:468.2px;" width="12" height="14" viewBox="0 0 12 14"><path d="M1.5 1.5 H7.2 L10.5 4.8 V12.5 H1.5 Z" fill="#f3f3f3" stroke="#9a9a9a" stroke-width="1"/><path d="M7.2 1.5 V4.8 H10.5" fill="none" stroke="#9a9a9a" stroke-width="0.8"/></svg>
<div class="t" style="left:239.20px;top:472.04px;font-size:10px;color:#1f1f1f;font-weight:normal;font-style:normal;letter-spacing:0.161px;">Kariera</div>
<svg class="r" style="left:222.5px;top:487.7px;" width="12" height="14" viewBox="0 0 12 14"><path d="M1.5 1.5 H7.2 L10.5 4.8 V12.5 H1.5 Z" fill="#f3f3f3" stroke="#9a9a9a" stroke-width="1"/><path d="M7.2 1.5 V4.8 H10.5" fill="none" stroke="#9a9a9a" stroke-width="0.8"/></svg>
<div class="t" style="left:239.20px;top:491.54px;font-size:10px;color:#1f1f1f;font-weight:normal;font-style:normal;letter-spacing:0.17px;">Kontakt</div>
<svg class="r" style="left:222.5px;top:507.2px;" width="12" height="14" viewBox="0 0 12 14"><path d="M1.5 1.5 H7.2 L10.5 4.8 V12.5 H1.5 Z" fill="#f4f4f4" stroke="#c8c8c8" stroke-width="1"/><path d="M7.2 1.5 V4.8 H10.5" fill="none" stroke="#c8c8c8" stroke-width="0.8"/></svg>
<div class="t" style="left:239.20px;top:511.04px;font-size:10px;color:#1f1f1f;font-weight:normal;font-style:normal;letter-spacing:0.18px;">Szukaj</div>
<svg class="r" style="left:222.5px;top:526.7px;" width="14" height="14" viewBox="0 0 14 14"><path d="M1.5 1.5 H6.8 L9.6 4.3 V12.8 H1.5 Z" fill="#f6f6f6" stroke="#9a9a9a" stroke-width="1"/><rect x="4" y="5" width="8" height="7.8" rx="0.8" fill="#fff" stroke="#8a8a8a" stroke-width="1"/><path d="M5.6 11.2 Q6 8.6 8.2 8.2 L7.6 7 L10.6 7.6 L9.4 10.3 L8.9 9.3 Q7.2 9.6 5.6 11.2Z" fill="#111"/></svg>
<div class="t" style="left:239.20px;top:530.53px;font-size:10px;color:#1f1f1f;font-weight:normal;font-style:normal;letter-spacing:0.143px;">Polityka prywatności</div>
<svg class="r" style="left:222.5px;top:546.2px;" width="12" height="14" viewBox="0 0 12 14"><path d="M1.5 1.5 H7.2 L10.5 4.8 V12.5 H1.5 Z" fill="#f4f4f4" stroke="#c8c8c8" stroke-width="1"/><path d="M7.2 1.5 V4.8 H10.5" fill="none" stroke="#c8c8c8" stroke-width="0.8"/></svg>
<div class="t" style="left:239.20px;top:550.03px;font-size:10px;color:#1f1f1f;font-weight:normal;font-style:normal;letter-spacing:0.15px;">Zapytanie ofertowe</div>
<svg class="r" style="left:213px;top:570.4px;" width="8" height="5.3" viewBox="0 0 8 5.3"><path d="M1 1 L4.0 4.3 L7 1" fill="none" stroke="#555" stroke-width="1.1"/></svg>
<svg class="r" style="left:223.0px;top:567.5px;" width="13" height="10" viewBox="0 0 13 10"><rect x="0" y="1" width="5.5" height="2" fill="#777"/><rect x="0" y="2.5" width="12.5" height="7" fill="#9a9a9a"/><rect x="0" y="2.5" width="12.5" height="1" fill="#777" opacity="0.5"/></svg>
<div class="t" style="left:239.20px;top:569.53px;font-size:10px;color:#1f1f1f;font-weight:normal;font-style:normal;letter-spacing:0.175px;">Content</div>
<svg class="r" style="left:237.5px;top:585.2px;" width="12" height="14" viewBox="0 0 12 14"><path d="M1.5 1.5 H7.2 L10.5 4.8 V12.5 H1.5 Z" fill="#f4f4f4" stroke="#c8c8c8" stroke-width="1"/><path d="M7.2 1.5 V4.8 H10.5" fill="none" stroke="#c8c8c8" stroke-width="0.8"/></svg>
<div class="t" style="left:254.20px;top:589.03px;font-size:10px;color:#1f1f1f;font-weight:normal;font-style:normal;letter-spacing:0.25px;">404</div>
<svg class="r" style="left:213px;top:609.4px;" width="8" height="5.3" viewBox="0 0 8 5.3"><path d="M1 1 L4.0 4.3 L7 1" fill="none" stroke="#555" stroke-width="1.1"/></svg>
<svg class="r" style="left:223.0px;top:606.5px;" width="13" height="10" viewBox="0 0 13 10"><rect x="0" y="1" width="5.5" height="2" fill="#777"/><rect x="0" y="2.5" width="12.5" height="7" fill="#9a9a9a"/><rect x="0" y="2.5" width="12.5" height="1" fill="#777" opacity="0.5"/></svg>
<div class="t" style="left:239.20px;top:608.53px;font-size:10px;color:#1f1f1f;font-weight:normal;font-style:normal;letter-spacing:0.239px;">Dane</div>
<svg class="r" style="left:238.0px;top:626.0px;" width="13" height="10" viewBox="0 0 13 10"><rect x="0" y="1" width="5.5" height="2" fill="#3e47a8"/><rect x="0" y="2.5" width="12.5" height="7" fill="#6f79e6"/><rect x="0" y="2.5" width="12.5" height="1" fill="#3e47a8" opacity="0.5"/></svg>
<div class="t" style="left:254.20px;top:628.03px;font-size:10px;color:#1f1f1f;font-weight:normal;font-style:normal;letter-spacing:0.153px;">Aktualności</div>
<svg class="r" style="left:228px;top:648.4px;" width="8" height="5.3" viewBox="0 0 8 5.3"><path d="M1 1 L4.0 4.3 L7 1" fill="none" stroke="#555" stroke-width="1.1"/></svg>
<svg class="r" style="left:238.0px;top:645.5px;" width="13" height="10" viewBox="0 0 13 10"><rect x="0" y="1" width="5.5" height="2" fill="#777"/><rect x="0" y="2.5" width="12.5" height="7" fill="#9a9a9a"/><rect x="0" y="2.5" width="12.5" height="1" fill="#777" opacity="0.5"/></svg>
<div class="t" style="left:254.20px;top:647.53px;font-size:10px;color:#1f1f1f;font-weight:normal;font-style:normal;letter-spacing:0.154px;">Oferta produktowa</div>
<svg class="r" style="left:253.0px;top:665.0px;" width="13" height="10" viewBox="0 0 13 10"><rect x="0" y="1" width="5.5" height="2" fill="#777"/><rect x="0" y="2.5" width="12.5" height="7" fill="#9a9a9a"/><rect x="0" y="2.5" width="12.5" height="1" fill="#777" opacity="0.5"/></svg>
<div class="t" style="left:269.20px;top:667.03px;font-size:10px;color:#1f1f1f;font-weight:normal;font-style:normal;letter-spacing:0.169px;">Produkty</div>
<svg class="r" style="left:253.0px;top:684.5px;" width="13" height="10" viewBox="0 0 13 10"><rect x="0" y="1" width="5.5" height="2" fill="#777"/><rect x="0" y="2.5" width="12.5" height="7" fill="#9a9a9a"/><rect x="0" y="2.5" width="12.5" height="1" fill="#777" opacity="0.5"/></svg>
<div class="t" style="left:269.20px;top:686.53px;font-size:10px;color:#1f1f1f;font-weight:normal;font-style:normal;letter-spacing:0.161px;">Kategorie</div>
<svg class="r" style="left:253.0px;top:704.0px;" width="13" height="10" viewBox="0 0 13 10"><rect x="0" y="1" width="5.5" height="2" fill="#777"/><rect x="0" y="2.5" width="12.5" height="7" fill="#9a9a9a"/><rect x="0" y="2.5" width="12.5" height="1" fill="#777" opacity="0.5"/></svg>
<div class="t" style="left:269.20px;top:706.03px;font-size:10px;color:#1f1f1f;font-weight:normal;font-style:normal;letter-spacing:0.157px;">Słowniki</div>
<svg class="r" style="left:238.0px;top:723.5px;" width="13" height="10" viewBox="0 0 13 10"><rect x="0" y="1" width="5.5" height="2" fill="#777"/><rect x="0" y="2.5" width="12.5" height="7" fill="#9a9a9a"/><rect x="0" y="2.5" width="12.5" height="1" fill="#777" opacity="0.5"/></svg>
<div class="t" style="left:254.20px;top:725.53px;font-size:10px;color:#1f1f1f;font-weight:normal;font-style:normal;letter-spacing:0.149px;">Oferty pracy</div>
</div>
<div class="r" style="left:423px;top:60px;width:107px;height:20px;background:#f0f0f0;border:1px solid #c6c6c6;border-radius:2px;box-sizing:border-box;"></div>
<svg class="r" style="left:431.5px;top:66.5px;" width="8" height="8" viewBox="0 0 8 8"><path d="M4 0.5 V7.5 M0.5 4 H7.5" stroke="#111" stroke-width="1.6"/></svg>
<div class="t" style="left:444.75px;top:66.00px;font-size:8.5px;color:#222;font-weight:normal;font-style:normal;letter-spacing:0.236px;">Stwórz nowy rekord</div>
<div class="r" style="left:536px;top:60px;width:130px;height:20px;background:#f0f0f0;border:1px solid #c6c6c6;border-radius:2px;box-sizing:border-box;"></div>
<svg class="r" style="left:543.5px;top:63px;" width="12" height="14" viewBox="0 0 12 14"><path d="M6.2 11.6 H2.6 A1.1 1.1 0 0 1 1.5 10.5 V2.5 A1.1 1.1 0 0 1 2.6 1.4 H7.2 L9.8 4" fill="none" stroke="#333" stroke-width="1.3"/><path d="M6.2 12.4 L10.9 7.7" stroke="#000" stroke-width="2.3"/><circle cx="9.9" cy="11.5" r="0.75" fill="#222"/></svg>
<div class="t" style="left:558.00px;top:66.00px;font-size:8.5px;color:#222;font-weight:normal;font-style:normal;letter-spacing:0.213px;">Edytuj właściwości strony</div>
<div class="t" style="left:969.60px;top:43.73px;font-size:10px;color:#333;font-weight:normal;font-style:normal;letter-spacing:0.206px;">Ścieżka: /Home/Dane/</div>
<svg class="r" style="left:1077px;top:43px;" width="13" height="10" viewBox="0 0 13 10"><rect x="0" y="1" width="5.5" height="2" fill="#777"/><rect x="0" y="2.5" width="12.5" height="7" fill="#9a9a9a"/><rect x="0" y="2.5" width="12.5" height="1" fill="#777" opacity="0.5"/></svg>
<div class="t" style="left:1093.00px;top:43.73px;font-size:10px;color:#111;font-weight:bold;font-style:normal;letter-spacing:0.532px;">Oferty pracy [34]</div>
<div class="r" style="left:1007px;top:60px;width:51px;height:20px;background:#f0f0f0;border:1px solid #c6c6c6;border-radius:2px;box-sizing:border-box;"></div>
<div class="r" style="left:1032px;top:61px;width:1px;height:18px;background:#c6c6c6;border-radius:0px;box-sizing:border-box;"></div>
<svg class="r" style="left:1015.5px;top:64px;" width="10" height="12" viewBox="0 0 10 12"><path d="M3.6 0.3 H8.3 L6 4.6 H8.9 L2.4 11.8 L3.9 6.6 H0.9 Z" fill="#111"/></svg>
<svg class="r" style="left:1038px;top:64px;" width="13" height="12" viewBox="0 0 13 12"><path d="M5.4 1.3 A4.3 4.3 0 0 1 10.63 5.6" fill="none" stroke="#111" stroke-width="1.3"/><path d="M8.8 5.4 H12.4 L10.6 8.2Z" fill="#111"/><path d="M7.4 9.7 A4.3 4.3 0 0 1 2.17 5.4" fill="none" stroke="#111" stroke-width="1.3"/><path d="M0.4 5.6 H4 L2.2 2.8Z" fill="#111"/></svg>
<div class="r" style="left:1063px;top:60px;width:26px;height:20px;background:#f0f0f0;border:1px solid #c6c6c6;border-radius:2px;box-sizing:border-box;"></div>
<svg class="r" style="left:1070px;top:64px;" width="12" height="12" viewBox="0 0 12 12"><path d="M2.2 0.8 H9.8 A1.4 1.4 0 0 1 11.2 2.2 V7.5 L7.5 11.2 H2.2 A1.4 1.4 0 0 1 0.8 9.8 V2.2 A1.4 1.4 0 0 1 2.2 0.8Z" fill="none" stroke="#222" stroke-width="1.2"/><path d="M7.2 11 V8.8 A1.2 1.2 0 0 1 8.4 7.6 H11" fill="none" stroke="#222" stroke-width="1.1"/></svg>
<div class="r" style="left:1094px;top:60px;width:42px;height:20px;background:#f0f0f0;border:1px solid #c6c6c6;border-radius:2px;box-sizing:border-box;"></div>
<div class="t" style="left:1101.40px;top:66.00px;font-size:8.5px;color:#222;font-weight:normal;font-style:normal;letter-spacing:0.103px;">View</div>
<svg class="r" style="left:1124.5px;top:68px;" width="6" height="4" viewBox="0 0 6 4"><path d="M0.5 0.5 H5.5 L3 3.2Z" fill="#222"/></svg>
<div class="r" style="left:1146px;top:60px;width:36px;height:20px;background:#f0f0f0;border:1px solid #c6c6c6;border-radius:2px;box-sizing:border-box;"></div>
<svg class="r" style="left:1154.5px;top:64.5px;" width="10" height="11" viewBox="0 0 10 11"><circle cx="2" cy="5.5" r="1.4" fill="none" stroke="#222" stroke-width="1"/><circle cx="7.8" cy="1.9" r="1.4" fill="none" stroke="#222" stroke-width="1"/><circle cx="7.8" cy="9.1" r="1.4" fill="none" stroke="#222" stroke-width="1"/><path d="M3.2 4.8 L6.6 2.6 M3.2 6.2 L6.6 8.4" stroke="#222" stroke-width="1"/></svg>
<svg class="r" style="left:1169.5px;top:68px;" width="6" height="4" viewBox="0 0 6 4"><path d="M0.5 0.5 H5.5 L3 3.2Z" fill="#222"/></svg>
<div class="t" style="left:423.60px;top:105.04px;font-size:18.5px;color:#333;font-weight:normal;font-style:normal;letter-spacing:0.186px;-webkit-text-stroke:0;">Oferty pracy</div>
<svg class="r" style="left:1164.5px;top:108px;" width="13" height="12" viewBox="0 0 13 12"><g transform="rotate(-42 6.5 6)"><rect x="0.5" y="4.6" width="11.8" height="2.9" rx="1.2" fill="#c8c8c8"/><rect x="9.3" y="4.6" width="0.8" height="2.9" fill="#fff"/></g><circle cx="2.7" cy="9.6" r="0.6" fill="#fff"/></svg>
<div class="r" style="left:423px;top:133px;width:196px;height:23px;background:#fff;border:1px solid #cfcfcf;border-radius:2px;box-sizing:border-box;"></div>
<div class="t" style="left:433.30px;top:140.13px;font-size:10px;color:#333;font-weight:normal;font-style:normal;letter-spacing:0.144px;">Dodaj nowe tłumaczenie tej strony</div>
<svg class="r" style="left:598.5px;top:141.5px;" width="9" height="6" viewBox="0 0 9 6"><path d="M1 1 L4.5 4.5 L8 1" fill="none" stroke="#333" stroke-width="1.3"/></svg>
<div class="r" style="left:423px;top:168px;width:758px;height:172px;background:#fff;border:1px solid #d9d9d9;border-radius:3px;box-sizing:border-box;"></div>
<div class="r" style="left:424px;top:169px;width:756px;height:37px;background:#f4f4f4;border-radius:0px;box-sizing:border-box;border-radius:3px 3px 0 0;"></div>
<div class="r" style="left:424px;top:206px;width:756px;height:1px;background:#e3e3e3;border-radius:0px;box-sizing:border-box;"></div>
<div class="t" style="left:436.00px;top:184.03px;font-size:10px;color:#111;font-weight:bold;font-style:normal;letter-spacing:0.472px;">Pracodawca (3)</div>
<svg class="r" style="left:522px;top:183.5px;" width="6" height="8" viewBox="0 0 6 8"><path d="M1.2 1 L4.5 4 L1.2 7" fill="none" stroke="#444" stroke-width="1"/></svg>
<div class="r" style="left:911px;top:178px;width:79px;height:20px;background:#f0f0f0;border:1px solid #c6c6c6;border-radius:2px;box-sizing:border-box;"></div>
<svg class="r" style="left:919.5px;top:184px;" width="8" height="8" viewBox="0 0 8 8"><path d="M4 0.5 V7.5 M0.5 4 H7.5" stroke="#111" stroke-width="1.6"/></svg>
<div class="t" style="left:932.70px;top:184.00px;font-size:8.5px;color:#222;font-weight:normal;font-style:normal;letter-spacing:0.159px;">Nowy rekord</div>
<div class="r" style="left:993px;top:178px;width:56px;height:20px;background:#f0f0f0;border:1px solid #c6c6c6;border-radius:2px;box-sizing:border-box;"></div>
<svg class="r" style="left:999.5px;top:182.5px;" width="12" height="11" viewBox="0 0 12 11"><path d="M5.9 0.3 V4.5" stroke="#111" stroke-width="1.7"/><path d="M3.3 3.9 H8.5 L5.9 6.6Z" fill="#111"/><path d="M3.6 6 H2 A1.1 1.1 0 0 0 0.9 7.1 V8.9 A1.1 1.1 0 0 0 2 10 H9.8 A1.1 1.1 0 0 0 10.9 8.9 V7.1 A1.1 1.1 0 0 0 9.8 6 H8.2" fill="none" stroke="#444" stroke-width="1.2"/></svg>
<div class="t" style="left:1014.00px;top:184.00px;font-size:8.5px;color:#222;font-weight:normal;font-style:normal;letter-spacing:-0.021px;">Pobierz</div>
<div class="r" style="left:1052px;top:178px;width:88px;height:20px;background:#f0f0f0;border:1px solid #c6c6c6;border-radius:2px;box-sizing:border-box;"></div>
<svg class="r" style="left:1059.5px;top:183px;" width="12" height="10" viewBox="0 0 12 10"><rect x="0.7" y="0.7" width="10.6" height="8.6" rx="1.6" fill="#d0d0d0" stroke="#4a4a4a" stroke-width="1.3"/><rect x="4" y="1" width="4" height="8" fill="#8c8c8c"/><path d="M4 1 V9 M8 1 V9" stroke="#3a3a3a" stroke-width="0.9"/><path d="M1.3 5 H3.6" stroke="#fff" stroke-width="0.9"/><circle cx="9.7" cy="5" r="0.6" fill="#fff"/></svg>
<div class="t" style="left:1073.90px;top:184.00px;font-size:8.5px;color:#222;font-weight:normal;font-style:normal;letter-spacing:0.122px;">Pokaż kolumny</div>
<div class="r" style="left:1143px;top:178px;width:25px;height:20px;background:#f0f0f0;border:1px solid #c6c6c6;border-radius:2px;box-sizing:border-box;"></div>
<svg class="r" style="left:1151px;top:185px;" width="9" height="6" viewBox="0 0 9 6"><path d="M1 5 L4.5 1.5 L8 5" fill="none" stroke="#333" stroke-width="1.1"/></svg>
<div class="r" style="left:424px;top:233px;width:756px;height:1px;background:#e3e3e3;border-radius:0px;box-sizing:border-box;"></div>
<svg class="r" style="left:436px;top:214.5px;" width="12" height="12" viewBox="0 0 12 12"><rect x="0.75" y="0.75" width="10.5" height="10.5" rx="2" fill="none" stroke="#555" stroke-width="1.1" stroke-dasharray="1.6 1.1"/></svg>
<svg class="r" style="left:452.5px;top:219px;" width="6" height="4" viewBox="0 0 6 4"><path d="M0.3 0.5 H5.7 L3 3.3Z" fill="#222"/></svg>
<div class="t" style="left:473.50px;top:217.41px;font-size:9.2px;color:#111;font-weight:bold;font-style:normal;letter-spacing:1.076px;">Nazwa</div>
<svg class="r" style="left:512.5px;top:214.5px;" width="5" height="12" viewBox="0 0 5 12"><path d="M2.5 1 V11" stroke="#444" stroke-width="0.9"/><path d="M1 2.2 L2.5 0.5 L4 2.2 M1 9.8 L2.5 11.5 L4 9.8" fill="none" stroke="#444" stroke-width="0.9"/></svg>
<div class="t" style="left:1118.70px;top:217.13px;font-size:10px;color:#222;font-weight:normal;font-style:italic;letter-spacing:-0.017px;">Lokalizacja</div>
<div class="r" style="left:424px;top:234px;width:756px;height:35px;background:#f9f9f9;border-radius:0px;box-sizing:border-box;"></div>
<div class="r" style="left:424px;top:269px;width:756px;height:1px;background:#e3e3e3;border-radius:0px;box-sizing:border-box;"></div>
<svg class="r" style="left:436px;top:246px;" width="12" height="12" viewBox="0 0 12 12"><rect x="0.8" y="0.8" width="10.4" height="10.4" rx="2" fill="#fff" stroke="#5a5a5a" stroke-width="1.4"/></svg>
<svg class="r" style="left:453.5px;top:246.3px;" width="14" height="11" viewBox="0 0 14 11"><rect x="5.3" y="0.4" width="3.3" height="3.3" rx="0.7" fill="#4f8fe6"/><path d="M6.95 3.7 V5 M2.1 6.9 V5 H11.6 V6.9" fill="none" stroke="#8d7aa0" stroke-width="0.6"/><circle cx="2.1" cy="8.7" r="1.75" fill="#5cbf5c"/><rect x="5.2" y="7" width="3.4" height="3.4" rx="0.6" fill="#3aa33f"/><circle cx="11.6" cy="8.7" r="1.75" fill="#0f8a16"/></svg>
<div class="t" style="left:473.70px;top:247.13px;font-size:10px;color:#333;font-weight:normal;font-style:normal;letter-spacing:0px;transform:scaleX(0.9078);transform-origin:0 0;">DRUT-PLAS CABLES</div>
<div class="r" style="left:1011px;top:240px;width:66px;height:22px;background:#efefef;border:1px solid #cdcdcd;border-radius:2px;box-sizing:border-box;"></div>
<div class="r" style="left:1033px;top:241px;width:1px;height:20px;background:#cdcdcd;border-radius:0px;box-sizing:border-box;"></div>
<div class="r" style="left:1055px;top:241px;width:1px;height:20px;background:#cdcdcd;border-radius:0px;box-sizing:border-box;"></div>
<svg class="r" style="left:1016px;top:245.5px;" width="13" height="12" viewBox="0 0 13 12"><g transform="rotate(-43 6.3 5.7)"><rect x="0.2" y="4.1" width="12.2" height="3.3" rx="0.8" fill="#000"/><rect x="9.4" y="4.1" width="0.7" height="3.3" fill="#bbb"/></g><circle cx="2.1" cy="9.7" r="0.7" fill="#eee"/></svg>
<svg class="r" style="left:1037.5px;top:246.8px;" width="13" height="9" viewBox="0 0 13 9"><rect x="0.4" y="0.5" width="12.2" height="7.8" rx="3.9" fill="#000"/><circle cx="8.6" cy="4.4" r="2" fill="#fff"/></svg>
<svg class="r" style="left:1060.5px;top:245.5px;" width="11" height="12" viewBox="0 0 11 12"><path d="M0.5 2.1 H10.5" stroke="#222" stroke-width="1.1"/><path d="M3.8 1.8 V0.7 H7.2 V1.8" fill="none" stroke="#222" stroke-width="0.9"/><path d="M1.5 2.6 L1.9 10.2 A1.1 1.1 0 0 0 3 11.3 H8 A1.1 1.1 0 0 0 9.1 10.2 L9.5 2.6" fill="none" stroke="#222" stroke-width="1.1"/><path d="M4.2 4.3 V9.6 M6.8 4.3 V9.6" stroke="#333" stroke-width="0.8"/></svg>
<div class="r" style="left:1084.5px;top:240px;width:22px;height:22px;background:#efefef;border:1px solid #cdcdcd;border-radius:2px;box-sizing:border-box;"></div>
<svg class="r" style="left:1094px;top:246.5px;" width="3" height="10" viewBox="0 0 3 10"><circle cx="1.5" cy="1.2" r="0.95" fill="#222"/><circle cx="1.5" cy="5" r="0.95" fill="#222"/><circle cx="1.5" cy="8.8" r="0.95" fill="#222"/></svg>
<div class="r" style="left:1119px;top:247px;width:12px;height:4.5px;background:#f4f4f4;border-radius:0px;box-sizing:border-box;box-shadow:inset 0 0 0 0.5px #ddd;"></div>
<div class="r" style="left:1119px;top:251.5px;width:12px;height:4.5px;background:#dc143c;border-radius:0px;box-sizing:border-box;"></div>
<div class="t" style="left:1134.30px;top:246.76px;font-size:9.5px;color:#222;font-weight:normal;font-style:normal;letter-spacing:-0.009px;">Polski</div>
<div class="r" style="left:424px;top:304px;width:756px;height:1px;background:#e3e3e3;border-radius:0px;box-sizing:border-box;"></div>
<svg class="r" style="left:436px;top:281px;" width="12" height="12" viewBox="0 0 12 12"><rect x="0.8" y="0.8" width="10.4" height="10.4" rx="2" fill="#fff" stroke="#5a5a5a" stroke-width="1.4"/></svg>
<svg class="r" style="left:453.5px;top:281.3px;" width="14" height="11" viewBox="0 0 14 11"><rect x="5.3" y="0.4" width="3.3" height="3.3" rx="0.7" fill="#4f8fe6"/><path d="M6.95 3.7 V5 M2.1 6.9 V5 H11.6 V6.9" fill="none" stroke="#8d7aa0" stroke-width="0.6"/><circle cx="2.1" cy="8.7" r="1.75" fill="#5cbf5c"/><rect x="5.2" y="7" width="3.4" height="3.4" rx="0.6" fill="#3aa33f"/><circle cx="11.6" cy="8.7" r="1.75" fill="#0f8a16"/></svg>
<div class="t" style="left:473.70px;top:282.14px;font-size:10px;color:#333;font-weight:normal;font-style:normal;letter-spacing:0px;transform:scaleX(0.9059);transform-origin:0 0;">DRUT-PLAST PRODUKCJA</div>
<div class="r" style="left:1011px;top:275px;width:66px;height:22px;background:#efefef;border:1px solid #cdcdcd;border-radius:2px;box-sizing:border-box;"></div>
<div class="r" style="left:1033px;top:276px;width:1px;height:20px;background:#cdcdcd;border-radius:0px;box-sizing:border-box;"></div>
<div class="r" style="left:1055px;top:276px;width:1px;height:20px;background:#cdcdcd;border-radius:0px;box-sizing:border-box;"></div>
<svg class="r" style="left:1016px;top:280.5px;" width="13" height="12" viewBox="0 0 13 12"><g transform="rotate(-43 6.3 5.7)"><rect x="0.2" y="4.1" width="12.2" height="3.3" rx="0.8" fill="#000"/><rect x="9.4" y="4.1" width="0.7" height="3.3" fill="#bbb"/></g><circle cx="2.1" cy="9.7" r="0.7" fill="#eee"/></svg>
<svg class="r" style="left:1037.5px;top:281.8px;" width="13" height="9" viewBox="0 0 13 9"><rect x="0.4" y="0.5" width="12.2" height="7.8" rx="3.9" fill="#000"/><circle cx="8.6" cy="4.4" r="2" fill="#fff"/></svg>
<svg class="r" style="left:1060.5px;top:280.5px;" width="11" height="12" viewBox="0 0 11 12"><path d="M0.5 2.1 H10.5" stroke="#222" stroke-width="1.1"/><path d="M3.8 1.8 V0.7 H7.2 V1.8" fill="none" stroke="#222" stroke-width="0.9"/><path d="M1.5 2.6 L1.9 10.2 A1.1 1.1 0 0 0 3 11.3 H8 A1.1 1.1 0 0 0 9.1 10.2 L9.5 2.6" fill="none" stroke="#222" stroke-width="1.1"/><path d="M4.2 4.3 V9.6 M6.8 4.3 V9.6" stroke="#333" stroke-width="0.8"/></svg>
<div class="r" style="left:1084.5px;top:275px;width:22px;height:22px;background:#efefef;border:1px solid #cdcdcd;border-radius:2px;box-sizing:border-box;"></div>
<svg class="r" style="left:1094px;top:281.5px;" width="3" height="10" viewBox="0 0 3 10"><circle cx="1.5" cy="1.2" r="0.95" fill="#222"/><circle cx="1.5" cy="5" r="0.95" fill="#222"/><circle cx="1.5" cy="8.8" r="0.95" fill="#222"/></svg>
<div class="r" style="left:1119px;top:282px;width:12px;height:4.5px;background:#f4f4f4;border-radius:0px;box-sizing:border-box;box-shadow:inset 0 0 0 0.5px #ddd;"></div>
<div class="r" style="left:1119px;top:286.5px;width:12px;height:4.5px;background:#dc143c;border-radius:0px;box-sizing:border-box;"></div>
<div class="t" style="left:1134.30px;top:281.76px;font-size:9.5px;color:#222;font-weight:normal;font-style:normal;letter-spacing:-0.009px;">Polski</div>
<div class="r" style="left:424px;top:304px;width:756px;height:35px;background:#f9f9f9;border-radius:0px;box-sizing:border-box;"></div>
<svg class="r" style="left:436px;top:316px;" width="12" height="12" viewBox="0 0 12 12"><rect x="0.8" y="0.8" width="10.4" height="10.4" rx="2" fill="#fff" stroke="#5a5a5a" stroke-width="1.4"/></svg>
<svg class="r" style="left:453.5px;top:316.3px;" width="14" height="11" viewBox="0 0 14 11"><rect x="5.3" y="0.4" width="3.3" height="3.3" rx="0.7" fill="#4f8fe6"/><path d="M6.95 3.7 V5 M2.1 6.9 V5 H11.6 V6.9" fill="none" stroke="#8d7aa0" stroke-width="0.6"/><circle cx="2.1" cy="8.7" r="1.75" fill="#5cbf5c"/><rect x="5.2" y="7" width="3.4" height="3.4" rx="0.6" fill="#3aa33f"/><circle cx="11.6" cy="8.7" r="1.75" fill="#0f8a16"/></svg>
<div class="t" style="left:473.70px;top:317.14px;font-size:10px;color:#333;font-weight:normal;font-style:normal;letter-spacing:0px;transform:scaleX(0.8912);transform-origin:0 0;">SENSOTRANSEL</div>
<div class="r" style="left:1011px;top:310px;width:66px;height:22px;background:#efefef;border:1px solid #cdcdcd;border-radius:2px;box-sizing:border-box;"></div>
<div class="r" style="left:1033px;top:311px;width:1px;height:20px;background:#cdcdcd;border-radius:0px;box-sizing:border-box;"></div>
<div class="r" style="left:1055px;top:311px;width:1px;height:20px;background:#cdcdcd;border-radius:0px;box-sizing:border-box;"></div>
<svg class="r" style="left:1016px;top:315.5px;" width="13" height="12" viewBox="0 0 13 12"><g transform="rotate(-43 6.3 5.7)"><rect x="0.2" y="4.1" width="12.2" height="3.3" rx="0.8" fill="#000"/><rect x="9.4" y="4.1" width="0.7" height="3.3" fill="#bbb"/></g><circle cx="2.1" cy="9.7" r="0.7" fill="#eee"/></svg>
<svg class="r" style="left:1037.5px;top:316.8px;" width="13" height="9" viewBox="0 0 13 9"><rect x="0.4" y="0.5" width="12.2" height="7.8" rx="3.9" fill="#000"/><circle cx="8.6" cy="4.4" r="2" fill="#fff"/></svg>
<svg class="r" style="left:1060.5px;top:315.5px;" width="11" height="12" viewBox="0 0 11 12"><path d="M0.5 2.1 H10.5" stroke="#222" stroke-width="1.1"/><path d="M3.8 1.8 V0.7 H7.2 V1.8" fill="none" stroke="#222" stroke-width="0.9"/><path d="M1.5 2.6 L1.9 10.2 A1.1 1.1 0 0 0 3 11.3 H8 A1.1 1.1 0 0 0 9.1 10.2 L9.5 2.6" fill="none" stroke="#222" stroke-width="1.1"/><path d="M4.2 4.3 V9.6 M6.8 4.3 V9.6" stroke="#333" stroke-width="0.8"/></svg>
<div class="r" style="left:1084.5px;top:310px;width:22px;height:22px;background:#efefef;border:1px solid #cdcdcd;border-radius:2px;box-sizing:border-box;"></div>
<svg class="r" style="left:1094px;top:316.5px;" width="3" height="10" viewBox="0 0 3 10"><circle cx="1.5" cy="1.2" r="0.95" fill="#222"/><circle cx="1.5" cy="5" r="0.95" fill="#222"/><circle cx="1.5" cy="8.8" r="0.95" fill="#222"/></svg>
<div class="r" style="left:1119px;top:317px;width:12px;height:4.5px;background:#f4f4f4;border-radius:0px;box-sizing:border-box;box-shadow:inset 0 0 0 0.5px #ddd;"></div>
<div class="r" style="left:1119px;top:321.5px;width:12px;height:4.5px;background:#dc143c;border-radius:0px;box-sizing:border-box;"></div>
<div class="t" style="left:1134.30px;top:316.76px;font-size:9.5px;color:#222;font-weight:normal;font-style:normal;letter-spacing:-0.009px;">Polski</div>
<div class="r" style="left:423px;top:358px;width:758px;height:207px;background:#fff;border:1px solid #d9d9d9;border-radius:3px;box-sizing:border-box;"></div>
<div class="r" style="left:424px;top:359px;width:756px;height:37px;background:#f4f4f4;border-radius:0px;box-sizing:border-box;border-radius:3px 3px 0 0;"></div>
<div class="r" style="left:424px;top:396px;width:756px;height:1px;background:#e3e3e3;border-radius:0px;box-sizing:border-box;"></div>
<div class="t" style="left:436.00px;top:374.04px;font-size:10px;color:#111;font-weight:bold;font-style:normal;letter-spacing:0.499px;">Oferty pracy (4)</div>
<svg class="r" style="left:524px;top:373.5px;" width="6" height="8" viewBox="0 0 6 8"><path d="M1.2 1 L4.5 4 L1.2 7" fill="none" stroke="#444" stroke-width="1"/></svg>
<div class="r" style="left:911px;top:368px;width:79px;height:20px;background:#f0f0f0;border:1px solid #c6c6c6;border-radius:2px;box-sizing:border-box;"></div>
<svg class="r" style="left:919.5px;top:374px;" width="8" height="8" viewBox="0 0 8 8"><path d="M4 0.5 V7.5 M0.5 4 H7.5" stroke="#111" stroke-width="1.6"/></svg>
<div class="t" style="left:932.70px;top:374.00px;font-size:8.5px;color:#222;font-weight:normal;font-style:normal;letter-spacing:0.159px;">Nowy rekord</div>
<div class="r" style="left:993px;top:368px;width:56px;height:20px;background:#f0f0f0;border:1px solid #c6c6c6;border-radius:2px;box-sizing:border-box;"></div>
<svg class="r" style="left:999.5px;top:372.5px;" width="12" height="11" viewBox="0 0 12 11"><path d="M5.9 0.3 V4.5" stroke="#111" stroke-width="1.7"/><path d="M3.3 3.9 H8.5 L5.9 6.6Z" fill="#111"/><path d="M3.6 6 H2 A1.1 1.1 0 0 0 0.9 7.1 V8.9 A1.1 1.1 0 0 0 2 10 H9.8 A1.1 1.1 0 0 0 10.9 8.9 V7.1 A1.1 1.1 0 0 0 9.8 6 H8.2" fill="none" stroke="#444" stroke-width="1.2"/></svg>
<div class="t" style="left:1014.00px;top:374.00px;font-size:8.5px;color:#222;font-weight:normal;font-style:normal;letter-spacing:-0.021px;">Pobierz</div>
<div class="r" style="left:1052px;top:368px;width:88px;height:20px;background:#f0f0f0;border:1px solid #c6c6c6;border-radius:2px;box-sizing:border-box;"></div>
<svg class="r" style="left:1059.5px;top:373px;" width="12" height="10" viewBox="0 0 12 10"><rect x="0.7" y="0.7" width="10.6" height="8.6" rx="1.6" fill="#d0d0d0" stroke="#4a4a4a" stroke-width="1.3"/><rect x="4" y="1" width="4" height="8" fill="#8c8c8c"/><path d="M4 1 V9 M8 1 V9" stroke="#3a3a3a" stroke-width="0.9"/><path d="M1.3 5 H3.6" stroke="#fff" stroke-width="0.9"/><circle cx="9.7" cy="5" r="0.6" fill="#fff"/></svg>
<div class="t" style="left:1073.90px;top:374.00px;font-size:8.5px;color:#222;font-weight:normal;font-style:normal;letter-spacing:0.122px;">Pokaż kolumny</div>
<div class="r" style="left:1143px;top:368px;width:25px;height:20px;background:#f0f0f0;border:1px solid #c6c6c6;border-radius:2px;box-sizing:border-box;"></div>
<svg class="r" style="left:1151px;top:375px;" width="9" height="6" viewBox="0 0 9 6"><path d="M1 5 L4.5 1.5 L8 5" fill="none" stroke="#333" stroke-width="1.1"/></svg>
<div class="r" style="left:424px;top:423px;width:756px;height:1px;background:#e3e3e3;border-radius:0px;box-sizing:border-box;"></div>
<svg class="r" style="left:436px;top:404.5px;" width="12" height="12" viewBox="0 0 12 12"><rect x="0.75" y="0.75" width="10.5" height="10.5" rx="2" fill="none" stroke="#555" stroke-width="1.1" stroke-dasharray="1.6 1.1"/></svg>
<svg class="r" style="left:452.5px;top:409px;" width="6" height="4" viewBox="0 0 6 4"><path d="M0.3 0.5 H5.7 L3 3.3Z" fill="#222"/></svg>
<div class="t" style="left:473.50px;top:407.41px;font-size:9.2px;color:#111;font-weight:bold;font-style:normal;letter-spacing:1.078px;">Tytuł</div>
<svg class="r" style="left:504.5px;top:404.5px;" width="5" height="12" viewBox="0 0 5 12"><path d="M2.5 1 V11" stroke="#444" stroke-width="0.9"/><path d="M1 2.2 L2.5 0.5 L4 2.2 M1 9.8 L2.5 11.5 L4 9.8" fill="none" stroke="#444" stroke-width="0.9"/></svg>
<div class="t" style="left:1118.70px;top:407.14px;font-size:10px;color:#222;font-weight:normal;font-style:italic;letter-spacing:-0.017px;">Lokalizacja</div>
<div class="r" style="left:424px;top:424px;width:756px;height:35px;background:#f9f9f9;border-radius:0px;box-sizing:border-box;"></div>
<div class="r" style="left:424px;top:459px;width:756px;height:1px;background:#e3e3e3;border-radius:0px;box-sizing:border-box;"></div>
<svg class="r" style="left:436px;top:436px;" width="12" height="12" viewBox="0 0 12 12"><rect x="0.8" y="0.8" width="10.4" height="10.4" rx="2" fill="#fff" stroke="#5a5a5a" stroke-width="1.4"/></svg>
<svg class="r" style="left:454px;top:435px;" width="13" height="14" viewBox="0 0 13 14"><path d="M2 1.5 H7.8 L10.3 4 V11.5 H2 Z" fill="#fcfcfc" stroke="#b5b5b5" stroke-width="0.9"/><rect x="3.6" y="4.5" width="4.5" height="4" fill="#444"/><circle cx="8.3" cy="9.5" r="3.9" fill="#d0232a"/><rect x="6.3" y="8.9" width="4" height="1.3" fill="#fff"/></svg>
<div class="t" style="left:473.70px;top:436.74px;font-size:10px;color:#333;font-weight:normal;font-style:normal;letter-spacing:0.124px;">Starszy konsultant</div>
<div class="r" style="left:1011px;top:430px;width:66px;height:22px;background:#efefef;border:1px solid #cdcdcd;border-radius:2px;box-sizing:border-box;"></div>
<div class="r" style="left:1033px;top:431px;width:1px;height:20px;background:#cdcdcd;border-radius:0px;box-sizing:border-box;"></div>
<div class="r" style="left:1055px;top:431px;width:1px;height:20px;background:#cdcdcd;border-radius:0px;box-sizing:border-box;"></div>
<svg class="r" style="left:1016px;top:435.5px;" width="13" height="12" viewBox="0 0 13 12"><g transform="rotate(-43 6.3 5.7)"><rect x="0.2" y="4.1" width="12.2" height="3.3" rx="0.8" fill="#000"/><rect x="9.4" y="4.1" width="0.7" height="3.3" fill="#bbb"/></g><circle cx="2.1" cy="9.7" r="0.7" fill="#eee"/></svg>
<svg class="r" style="left:1038px;top:437px;" width="13" height="9" viewBox="0 0 13 9"><rect x="0.8" y="0.8" width="11.4" height="7.4" rx="3.7" fill="none" stroke="#222" stroke-width="1.2"/><circle cx="4.5" cy="4.5" r="2.2" fill="#222"/></svg>
<svg class="r" style="left:1060.5px;top:435.5px;" width="11" height="12" viewBox="0 0 11 12"><path d="M0.5 2.1 H10.5" stroke="#222" stroke-width="1.1"/><path d="M3.8 1.8 V0.7 H7.2 V1.8" fill="none" stroke="#222" stroke-width="0.9"/><path d="M1.5 2.6 L1.9 10.2 A1.1 1.1 0 0 0 3 11.3 H8 A1.1 1.1 0 0 0 9.1 10.2 L9.5 2.6" fill="none" stroke="#222" stroke-width="1.1"/><path d="M4.2 4.3 V9.6 M6.8 4.3 V9.6" stroke="#333" stroke-width="0.8"/></svg>
<div class="r" style="left:1084.5px;top:430px;width:22px;height:22px;background:#efefef;border:1px solid #cdcdcd;border-radius:2px;box-sizing:border-box;"></div>
<svg class="r" style="left:1094px;top:436.5px;" width="3" height="10" viewBox="0 0 3 10"><circle cx="1.5" cy="1.2" r="0.95" fill="#222"/><circle cx="1.5" cy="5" r="0.95" fill="#222"/><circle cx="1.5" cy="8.8" r="0.95" fill="#222"/></svg>
<div class="r" style="left:1119px;top:437px;width:12px;height:4.5px;background:#f4f4f4;border-radius:0px;box-sizing:border-box;box-shadow:inset 0 0 0 0.5px #ddd;"></div>
<div class="r" style="left:1119px;top:441.5px;width:12px;height:4.5px;background:#dc143c;border-radius:0px;box-sizing:border-box;"></div>
<div class="t" style="left:1134.30px;top:436.76px;font-size:9.5px;color:#222;font-weight:normal;font-style:normal;letter-spacing:-0.009px;">Polski</div>
<div class="r" style="left:424px;top:494px;width:756px;height:1px;background:#e3e3e3;border-radius:0px;box-sizing:border-box;"></div>
<svg class="r" style="left:436px;top:471px;" width="12" height="12" viewBox="0 0 12 12"><rect x="0.8" y="0.8" width="10.4" height="10.4" rx="2" fill="#fff" stroke="#5a5a5a" stroke-width="1.4"/></svg>
<svg class="r" style="left:455px;top:470px;" width="11" height="13" viewBox="0 0 11 13"><path d="M1 0.9 H7.5 L10 3.4 V11.7 H1 Z" fill="#fcfcfc" stroke="#b5b5b5" stroke-width="0.9"/><path d="M7.2 4 H3.6 V10.4 H7.2 M3.6 7.2 H6.8" fill="none" stroke="#333" stroke-width="1.3"/></svg>
<div class="t" style="left:473.70px;top:471.74px;font-size:10px;color:#333;font-weight:normal;font-style:normal;letter-spacing:0.134px;">Kontroler jakości produkcji</div>
<div class="r" style="left:1011px;top:465px;width:66px;height:22px;background:#efefef;border:1px solid #cdcdcd;border-radius:2px;box-sizing:border-box;"></div>
<div class="r" style="left:1033px;top:466px;width:1px;height:20px;background:#cdcdcd;border-radius:0px;box-sizing:border-box;"></div>
<div class="r" style="left:1055px;top:466px;width:1px;height:20px;background:#cdcdcd;border-radius:0px;box-sizing:border-box;"></div>
<svg class="r" style="left:1016px;top:470.5px;" width="13" height="12" viewBox="0 0 13 12"><g transform="rotate(-43 6.3 5.7)"><rect x="0.2" y="4.1" width="12.2" height="3.3" rx="0.8" fill="#000"/><rect x="9.4" y="4.1" width="0.7" height="3.3" fill="#bbb"/></g><circle cx="2.1" cy="9.7" r="0.7" fill="#eee"/></svg>
<svg class="r" style="left:1037.5px;top:471.8px;" width="13" height="9" viewBox="0 0 13 9"><rect x="0.4" y="0.5" width="12.2" height="7.8" rx="3.9" fill="#000"/><circle cx="8.6" cy="4.4" r="2" fill="#fff"/></svg>
<svg class="r" style="left:1060.5px;top:470.5px;" width="11" height="12" viewBox="0 0 11 12"><path d="M0.5 2.1 H10.5" stroke="#222" stroke-width="1.1"/><path d="M3.8 1.8 V0.7 H7.2 V1.8" fill="none" stroke="#222" stroke-width="0.9"/><path d="M1.5 2.6 L1.9 10.2 A1.1 1.1 0 0 0 3 11.3 H8 A1.1 1.1 0 0 0 9.1 10.2 L9.5 2.6" fill="none" stroke="#222" stroke-width="1.1"/><path d="M4.2 4.3 V9.6 M6.8 4.3 V9.6" stroke="#333" stroke-width="0.8"/></svg>
<div class="r" style="left:1084.5px;top:465px;width:22px;height:22px;background:#efefef;border:1px solid #cdcdcd;border-radius:2px;box-sizing:border-box;"></div>
<svg class="r" style="left:1094px;top:471.5px;" width="3" height="10" viewBox="0 0 3 10"><circle cx="1.5" cy="1.2" r="0.95" fill="#222"/><circle cx="1.5" cy="5" r="0.95" fill="#222"/><circle cx="1.5" cy="8.8" r="0.95" fill="#222"/></svg>
<div class="r" style="left:1119px;top:472px;width:12px;height:4.5px;background:#f4f4f4;border-radius:0px;box-sizing:border-box;box-shadow:inset 0 0 0 0.5px #ddd;"></div>
<div class="r" style="left:1119px;top:476.5px;width:12px;height:4.5px;background:#dc143c;border-radius:0px;box-sizing:border-box;"></div>
<div class="t" style="left:1134.30px;top:471.76px;font-size:9.5px;color:#222;font-weight:normal;font-style:normal;letter-spacing:-0.009px;">Polski</div>
<div class="r" style="left:424px;top:494px;width:756px;height:35px;background:#f9f9f9;border-radius:0px;box-sizing:border-box;"></div>
<div class="r" style="left:424px;top:529px;width:756px;height:1px;background:#e3e3e3;border-radius:0px;box-sizing:border-box;"></div>
<svg class="r" style="left:436px;top:506px;" width="12" height="12" viewBox="0 0 12 12"><rect x="0.8" y="0.8" width="10.4" height="10.4" rx="2" fill="#fff" stroke="#5a5a5a" stroke-width="1.4"/></svg>
<svg class="r" style="left:455px;top:505px;" width="11" height="13" viewBox="0 0 11 13"><path d="M1 0.9 H7.5 L10 3.4 V11.7 H1 Z" fill="#fcfcfc" stroke="#b5b5b5" stroke-width="0.9"/><path d="M7.2 4 H3.6 V10.4 H7.2 M3.6 7.2 H6.8" fill="none" stroke="#333" stroke-width="1.3"/></svg>
<div class="t" style="left:473.70px;top:506.74px;font-size:10px;color:#333;font-weight:normal;font-style:normal;letter-spacing:0.108px;">Operator maszyn produkcyjnych</div>
<div class="r" style="left:1011px;top:500px;width:66px;height:22px;background:#efefef;border:1px solid #cdcdcd;border-radius:2px;box-sizing:border-box;"></div>
<div class="r" style="left:1033px;top:501px;width:1px;height:20px;background:#cdcdcd;border-radius:0px;box-sizing:border-box;"></div>
<div class="r" style="left:1055px;top:501px;width:1px;height:20px;background:#cdcdcd;border-radius:0px;box-sizing:border-box;"></div>
<svg class="r" style="left:1016px;top:505.5px;" width="13" height="12" viewBox="0 0 13 12"><g transform="rotate(-43 6.3 5.7)"><rect x="0.2" y="4.1" width="12.2" height="3.3" rx="0.8" fill="#000"/><rect x="9.4" y="4.1" width="0.7" height="3.3" fill="#bbb"/></g><circle cx="2.1" cy="9.7" r="0.7" fill="#eee"/></svg>
<svg class="r" style="left:1037.5px;top:506.8px;" width="13" height="9" viewBox="0 0 13 9"><rect x="0.4" y="0.5" width="12.2" height="7.8" rx="3.9" fill="#000"/><circle cx="8.6" cy="4.4" r="2" fill="#fff"/></svg>
<svg class="r" style="left:1060.5px;top:505.5px;" width="11" height="12" viewBox="0 0 11 12"><path d="M0.5 2.1 H10.5" stroke="#222" stroke-width="1.1"/><path d="M3.8 1.8 V0.7 H7.2 V1.8" fill="none" stroke="#222" stroke-width="0.9"/><path d="M1.5 2.6 L1.9 10.2 A1.1 1.1 0 0 0 3 11.3 H8 A1.1 1.1 0 0 0 9.1 10.2 L9.5 2.6" fill="none" stroke="#222" stroke-width="1.1"/><path d="M4.2 4.3 V9.6 M6.8 4.3 V9.6" stroke="#333" stroke-width="0.8"/></svg>
<div class="r" style="left:1084.5px;top:500px;width:22px;height:22px;background:#efefef;border:1px solid #cdcdcd;border-radius:2px;box-sizing:border-box;"></div>
<svg class="r" style="left:1094px;top:506.5px;" width="3" height="10" viewBox="0 0 3 10"><circle cx="1.5" cy="1.2" r="0.95" fill="#222"/><circle cx="1.5" cy="5" r="0.95" fill="#222"/><circle cx="1.5" cy="8.8" r="0.95" fill="#222"/></svg>
<div class="r" style="left:1119px;top:507px;width:12px;height:4.5px;background:#f4f4f4;border-radius:0px;box-sizing:border-box;box-shadow:inset 0 0 0 0.5px #ddd;"></div>
<div class="r" style="left:1119px;top:511.5px;width:12px;height:4.5px;background:#dc143c;border-radius:0px;box-sizing:border-box;"></div>
<div class="t" style="left:1134.30px;top:506.76px;font-size:9.5px;color:#222;font-weight:normal;font-style:normal;letter-spacing:-0.009px;">Polski</div>
<svg class="r" style="left:436px;top:541px;" width="12" height="12" viewBox="0 0 12 12"><rect x="0.8" y="0.8" width="10.4" height="10.4" rx="2" fill="#fff" stroke="#5a5a5a" stroke-width="1.4"/></svg>
<svg class="r" style="left:455px;top:540px;" width="11" height="13" viewBox="0 0 11 13"><path d="M1 0.9 H7.5 L10 3.4 V11.7 H1 Z" fill="#fcfcfc" stroke="#b5b5b5" stroke-width="0.9"/><path d="M7.2 4 H3.6 V10.4 H7.2 M3.6 7.2 H6.8" fill="none" stroke="#333" stroke-width="1.3"/></svg>
<div class="t" style="left:473.70px;top:541.74px;font-size:10px;color:#333;font-weight:normal;font-style:normal;letter-spacing:0.108px;">Operator maszyn produkcyjnych</div>
<div class="r" style="left:1011px;top:535px;width:66px;height:22px;background:#efefef;border:1px solid #cdcdcd;border-radius:2px;box-sizing:border-box;"></div>
<div class="r" style="left:1033px;top:536px;width:1px;height:20px;background:#cdcdcd;border-radius:0px;box-sizing:border-box;"></div>
<div class="r" style="left:1055px;top:536px;width:1px;height:20px;background:#cdcdcd;border-radius:0px;box-sizing:border-box;"></div>
<svg class="r" style="left:1016px;top:540.5px;" width="13" height="12" viewBox="0 0 13 12"><g transform="rotate(-43 6.3 5.7)"><rect x="0.2" y="4.1" width="12.2" height="3.3" rx="0.8" fill="#000"/><rect x="9.4" y="4.1" width="0.7" height="3.3" fill="#bbb"/></g><circle cx="2.1" cy="9.7" r="0.7" fill="#eee"/></svg>
<svg class="r" style="left:1037.5px;top:541.8px;" width="13" height="9" viewBox="0 0 13 9"><rect x="0.4" y="0.5" width="12.2" height="7.8" rx="3.9" fill="#000"/><circle cx="8.6" cy="4.4" r="2" fill="#fff"/></svg>
<svg class="r" style="left:1060.5px;top:540.5px;" width="11" height="12" viewBox="0 0 11 12"><path d="M0.5 2.1 H10.5" stroke="#222" stroke-width="1.1"/><path d="M3.8 1.8 V0.7 H7.2 V1.8" fill="none" stroke="#222" stroke-width="0.9"/><path d="M1.5 2.6 L1.9 10.2 A1.1 1.1 0 0 0 3 11.3 H8 A1.1 1.1 0 0 0 9.1 10.2 L9.5 2.6" fill="none" stroke="#222" stroke-width="1.1"/><path d="M4.2 4.3 V9.6 M6.8 4.3 V9.6" stroke="#333" stroke-width="0.8"/></svg>
<div class="r" style="left:1084.5px;top:535px;width:22px;height:22px;background:#efefef;border:1px solid #cdcdcd;border-radius:2px;box-sizing:border-box;"></div>
<svg class="r" style="left:1094px;top:541.5px;" width="3" height="10" viewBox="0 0 3 10"><circle cx="1.5" cy="1.2" r="0.95" fill="#222"/><circle cx="1.5" cy="5" r="0.95" fill="#222"/><circle cx="1.5" cy="8.8" r="0.95" fill="#222"/></svg>
<div class="r" style="left:1119px;top:542px;width:12px;height:4.5px;background:#f4f4f4;border-radius:0px;box-sizing:border-box;box-shadow:inset 0 0 0 0.5px #ddd;"></div>
<div class="r" style="left:1119px;top:546.5px;width:12px;height:4.5px;background:#dc143c;border-radius:0px;box-sizing:border-box;"></div>
<div class="t" style="left:1134.30px;top:541.76px;font-size:9.5px;color:#222;font-weight:normal;font-style:normal;letter-spacing:-0.009px;">Polski</div>
<div class="r" style="left:423px;top:589px;width:758px;height:181px;background:#fff;border:1px solid #d9d9d9;border-radius:3px;box-sizing:border-box;"></div>
<div class="r" style="left:424px;top:590px;width:756px;height:32px;background:#f4f4f4;border-radius:0px;box-sizing:border-box;border-radius:3px 3px 0 0;"></div>
<div class="r" style="left:424px;top:621.5px;width:756px;height:1px;background:#e3e3e3;border-radius:0px;box-sizing:border-box;"></div>
<div class="t" style="left:435.80px;top:601.74px;font-size:10px;color:#111;font-weight:bold;font-style:normal;letter-spacing:0.222px;">Schowek</div>
<div class="r" style="left:424px;top:659px;width:756px;height:1px;background:#e3e3e3;border-radius:0px;box-sizing:border-box;"></div>
<div class="r" style="left:424px;top:695px;width:756px;height:1px;background:#e3e3e3;border-radius:0px;box-sizing:border-box;"></div>
<div class="r" style="left:424px;top:732px;width:756px;height:1px;background:#e3e3e3;border-radius:0px;box-sizing:border-box;"></div>
<svg class="r" style="left:436.5px;top:634.85px;" width="12" height="12" viewBox="0 0 12 12"><circle cx="6" cy="6" r="5.4" fill="#111"/><path d="M3.4 6.2 L5.2 8 L8.8 4.4" fill="none" stroke="#fff" stroke-width="1.3"/></svg>
<div class="t" style="left:452.00px;top:636.09px;font-size:10px;color:#333;font-weight:normal;font-style:normal;letter-spacing:0.169px;">Normalny (tryb pojedynczego rekordu)</div>
<svg class="r" style="left:436.5px;top:671.5px;" width="12" height="12" viewBox="0 0 12 12"><circle cx="6" cy="6" r="5.1" fill="#fff" stroke="#555" stroke-width="1"/></svg>
<div class="t" style="left:452.00px;top:672.74px;font-size:10px;color:#333;font-weight:normal;font-style:normal;letter-spacing:0.138px;">Schowek #1 (tryb wielokrotnego zaznaczenia)</div>
<svg class="r" style="left:436.5px;top:708.15px;" width="12" height="12" viewBox="0 0 12 12"><circle cx="6" cy="6" r="5.1" fill="#fff" stroke="#555" stroke-width="1"/></svg>
<div class="t" style="left:452.00px;top:709.38px;font-size:10px;color:#333;font-weight:normal;font-style:normal;letter-spacing:0.138px;">Schowek #2 (tryb wielokrotnego zaznaczenia)</div>
<svg class="r" style="left:436.5px;top:744.85px;" width="12" height="12" viewBox="0 0 12 12"><circle cx="6" cy="6" r="5.1" fill="#fff" stroke="#555" stroke-width="1"/></svg>
<div class="t" style="left:452.00px;top:746.09px;font-size:10px;color:#333;font-weight:normal;font-style:normal;letter-spacing:0.138px;">Schowek #3 (tryb wielokrotnego zaznaczenia)</div>
<div class="r" style="left:977px;top:630.5px;width:191px;height:19.5px;background:#f0f0f0;border:1px solid #c8c8c8;border-radius:2px;box-sizing:border-box;"></div>
<div class="r" style="left:1068px;top:631px;width:99.5px;height:18.5px;background:#c4c4c4;border-radius:0px;box-sizing:border-box;border-radius:0 2px 2px 0;"></div>
<svg class="r" style="left:984.5px;top:633.5px;" width="10" height="13" viewBox="0 0 10 13"><rect x="1" y="1.8" width="8" height="10.5" rx="1" fill="none" stroke="#333" stroke-width="1.1"/><rect x="3" y="0.6" width="4" height="2.2" fill="#333"/></svg>
<div class="t" style="left:998.00px;top:636.30px;font-size:8.5px;color:#222;font-weight:normal;font-style:normal;letter-spacing:0.234px;">Kopiuj elementy</div>
<svg class="r" style="left:1074.5px;top:633.5px;" width="12" height="13" viewBox="0 0 12 13"><circle cx="2.8" cy="2.8" r="1.9" fill="none" stroke="#111" stroke-width="1.2"/><circle cx="2.8" cy="10.2" r="1.9" fill="none" stroke="#111" stroke-width="1.2"/><path d="M4.3 4 L11 10.8 M4.3 9 L11 2.2" stroke="#111" stroke-width="1.2"/></svg>
<div class="t" style="left:1089.50px;top:636.30px;font-size:8.5px;color:#222;font-weight:normal;font-style:normal;letter-spacing:0.114px;">Przenieś elementy</div>
</div></div></body></html>
